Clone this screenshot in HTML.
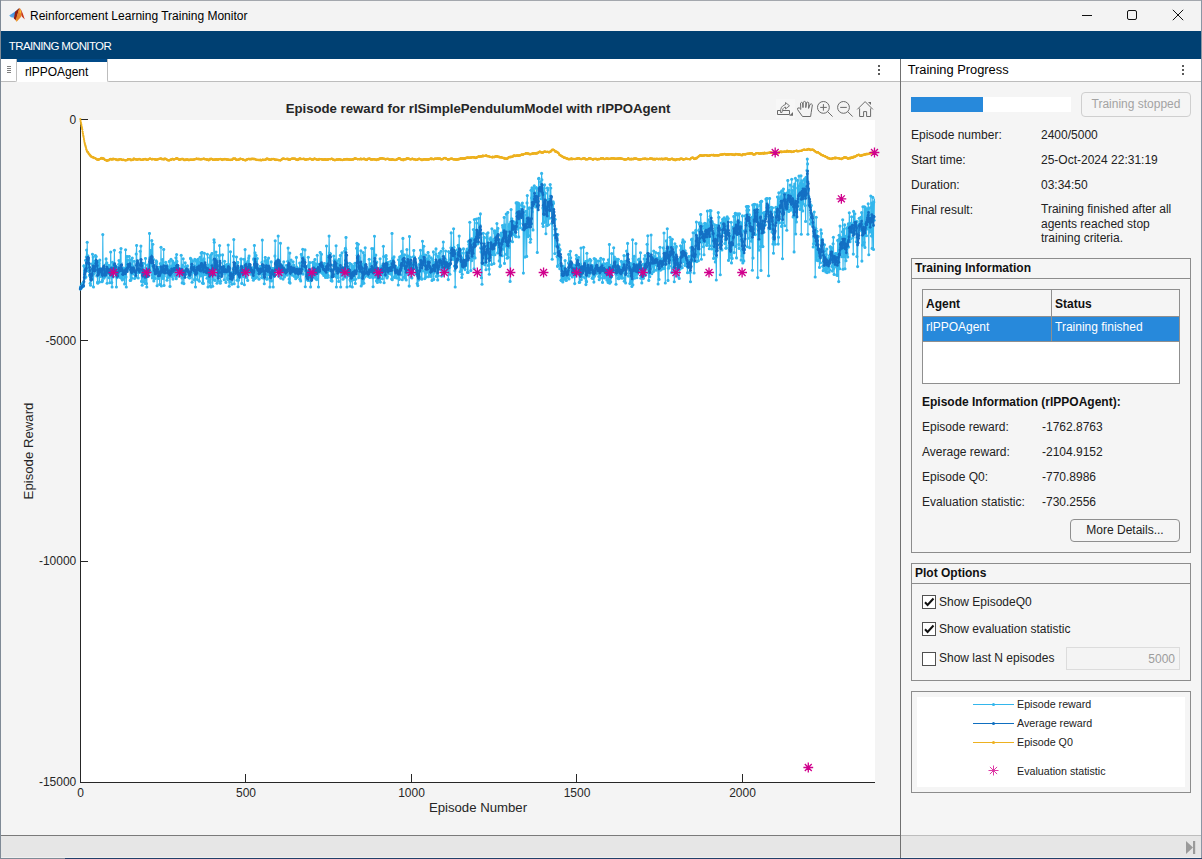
<!DOCTYPE html>
<html><head><meta charset="utf-8">
<style>
*{box-sizing:border-box;margin:0;padding:0}
html,body{width:1202px;height:859px;overflow:hidden;background:#f3f3f3;font-family:"Liberation Sans",sans-serif;color:#212121}
.abs{position:absolute}
#top0{left:0;top:0;width:1202px;height:1px;background:#a3a7ad}
#lb{left:0;top:0;width:1px;height:859px;background:#7f8a96}
#rb{left:1201px;top:0;width:1px;height:859px;background:#8a96a4}
#bb{left:0;top:858px;width:1202px;height:1px;background:linear-gradient(to right,#7f8a96 65px,#22406a 65px)}
#title{left:30px;top:9px;font-size:12px;color:#000;white-space:nowrap}
#band{left:1px;top:31px;width:1200px;height:28px;background:#004072}
#band span{position:absolute;left:7.8px;top:8.6px;font-size:11.5px;color:#fff;letter-spacing:-0.62px;white-space:nowrap}
#tabbar{left:1px;top:59px;width:899px;height:23px;background:#fff}
#tabrest{left:107px;top:59px;width:793px;height:23px;background:#fff;border-left:1px solid #bdbdbd;border-bottom:1px solid #bdbdbd;border-bottom-left-radius:2px}
#grip{left:1px;top:59px;width:16px;height:23px;background:#fff;border-right:1px solid #bdbdbd;border-bottom:1px solid #bdbdbd;border-bottom-right-radius:2px}
#tab{left:17px;top:59px;width:90px;height:23px;background:#fff;border-top:3px solid #004a88}
#tab span{position:absolute;left:8px;top:3px;font-size:12px;color:#000}
#plotbg{left:1px;top:82px;width:899px;height:753px;background:#f4f4f4}
#axes{left:81px;top:120px;width:794px;height:662px;background:#fff}
#divider{left:900px;top:59px;width:1px;height:799px;background:#707070;z-index:5}
#rhead{left:901px;top:59px;width:300px;height:23px;background:#fff;border-bottom:1px solid #bdbdbd}
#rhead span{position:absolute;left:6.7px;top:3.2px;font-size:12.85px;color:#000}
#rbg{left:901px;top:82px;width:300px;height:753px;background:#f5f5f5}
#status{left:1px;top:835px;width:1200px;height:23px;background:#e6e6e6;border-bottom:1px solid #efefef}
#stl{left:1px;top:835px;width:899px;height:1px;background:#7a7a7a}
#str{left:901px;top:835px;width:300px;height:1px;background:#bdbdbd}
.dots{width:3px;height:11px}
.dots i{position:absolute;left:0;width:2px;height:2px;background:#5a5a5a}
.t12{font-size:12px;white-space:nowrap;position:absolute;color:#222}
.tb{font-weight:bold}
.panel{position:absolute;border:1px solid #8c8c8c;background:#f5f5f5}
.phead{position:absolute;left:0;top:0;right:0;height:20px;border-bottom:1px solid #8c8c8c}
.phead span{position:absolute;left:3px;top:2px;font-size:12px;font-weight:bold;color:#111}
.ytl{position:absolute;left:0;width:76.3px;text-align:right;font-size:12px;color:#262626}
.xtl{position:absolute;top:786px;transform:translateX(-50%);font-size:12px;color:#262626;white-space:nowrap}
.btn{position:absolute;border:1px solid #8f8f8f;border-radius:4px;background:#f5f5f5;text-align:center;font-size:12px;color:#222;white-space:nowrap}
.cb{width:14px;height:14px;border:1px solid #505050;background:#fff}
.cb svg{position:absolute;left:0;top:0}
.leg{position:absolute;left:1017px;margin-top:1px;font-size:10.7px;color:#222;white-space:nowrap}
</style></head><body>
<div class="abs" id="top0"></div>
<div class="abs" id="title">Reinforcement Learning Training Monitor</div>
<!-- matlab logo -->
<svg class="abs" style="left:0;top:0" width="30" height="30" viewBox="0 0 30 30">
<defs><linearGradient id="lgb" x1="0" y1="1" x2="1" y2="0"><stop offset="0" stop-color="#62b4ee"/><stop offset="0.6" stop-color="#3a86d8"/><stop offset="1" stop-color="#1f55a0"/></linearGradient></defs>
<path d="M9.2 15.6 L13 13 L16.5 10.4 L19.2 8 L17.4 11.6 L15.4 14.6 L14 17.8 L11 17.3 Z" fill="url(#lgb)"/>
<path d="M15.2 11.8 L19.5 7.9 L18 13 L17 17 L16.5 21 L13.8 18.4 Z" fill="#8e1e12"/>
<path d="M19.6 7.8 L21.5 11 L22 15 L20.5 17.4 L16.6 21.8 L15.6 19.8 L17.6 14 L18.4 10.4 Z" fill="#e5832c"/>
<path d="M20 9 L21.1 11.5 L20.8 13.2 L19.4 13 Z" fill="#f4c12c"/>
<path d="M16 20 L17.4 19 L16.6 21.8 Z" fill="#f4b12e"/>
<path d="M20.2 8 L22.8 13.4 L24.8 19.6 L21.8 16.6 L21.2 11 Z" fill="#c8361c"/>
</svg>
<!-- window controls -->
<div class="abs" style="left:1082px;top:15px;width:10px;height:1px;background:#111"></div>
<div class="abs" style="left:1127px;top:10px;width:10px;height:10px;border:1px solid #111;border-radius:2px"></div>
<svg class="abs" style="left:1172px;top:9px" width="12" height="12" viewBox="0 0 12 12"><path d="M0.8 0.8L11.2 11.2M11.2 0.8L0.8 11.2" stroke="#111" stroke-width="1"/></svg>
<div class="abs" id="band"><span>TRAINING MONITOR</span></div>
<div class="abs" id="tabbar"></div>
<div class="abs" id="tabrest"></div>
<div class="abs" id="grip"></div>
<div class="abs" style="left:7px;top:66px;width:4px;height:1px;background:#808080"></div>
<div class="abs" style="left:7px;top:68px;width:4px;height:1px;background:#808080"></div>
<div class="abs" style="left:7px;top:70px;width:4px;height:1px;background:#808080"></div>
<div class="abs" style="left:7px;top:72px;width:4px;height:1px;background:#808080"></div>
<div class="abs" id="tab"><span>rlPPOAgent</span></div>
<div class="abs dots" style="left:878px;top:65px"><i style="top:0"></i><i style="top:4px"></i><i style="top:8px"></i></div>
<div class="abs" id="plotbg"></div>
<div class="abs" id="axes"></div>

<div class="abs" style="left:80px;top:119px;width:1px;height:664px;background:#262626"></div>
<div class="abs" style="left:80px;top:782px;width:795px;height:1px;background:#262626"></div>
<div class="abs" style="left:80px;top:119px;width:8px;height:1px;background:#262626"></div>
<div class="abs" style="left:80px;top:340px;width:8px;height:1px;background:#262626"></div>
<div class="abs" style="left:80px;top:561px;width:8px;height:1px;background:#262626"></div>
<div class="abs" style="left:245px;top:774px;width:1px;height:8px;background:#262626"></div>
<div class="abs" style="left:411px;top:774px;width:1px;height:8px;background:#262626"></div>
<div class="abs" style="left:576px;top:774px;width:1px;height:8px;background:#262626"></div>
<div class="abs" style="left:742px;top:774px;width:1px;height:8px;background:#262626"></div>
<div class="ytl" style="top:113px">0</div>
<div class="ytl" style="top:334px">-5000</div>
<div class="ytl" style="top:554px">-10000</div>
<div class="ytl" style="top:775px">-15000</div>
<div class="xtl" style="left:80.5px">0</div>
<div class="xtl" style="left:246px">500</div>
<div class="xtl" style="left:411.5px">1000</div>
<div class="xtl" style="left:577px">1500</div>
<div class="xtl" style="left:742.5px">2000</div>
<div class="abs" style="left:0;top:799.7px;width:956px;text-align:center;font-size:13.2px;color:#262626">Episode Number</div>
<div class="abs" style="left:28.8px;top:451px;width:0;height:0"><div style="position:absolute;left:-60px;top:-8px;width:120px;height:16px;text-align:center;font-size:13.2px;color:#262626;transform:rotate(-90deg)">Episode Reward</div></div>
<div class="abs" style="left:81px;top:101px;width:794px;text-align:center;font-size:13.2px;font-weight:bold;color:#262626">Episode reward for rlSimplePendulumModel with rlPPOAgent</div>

<svg class="abs" style="left:0;top:0" width="1202" height="859" viewBox="0 0 1202 859">
<defs>
<marker id="mlb" markerWidth="4" markerHeight="4" refX="2" refY="2" markerUnits="userSpaceOnUse"><circle cx="2" cy="2" r="1.55" fill="#33B6EC"/></marker>
<marker id="mdb" markerWidth="4" markerHeight="4" refX="2" refY="2" markerUnits="userSpaceOnUse"><circle cx="2" cy="2" r="1.4" fill="#1470C4"/></marker>
<marker id="mor" markerWidth="4" markerHeight="4" refX="2" refY="2" markerUnits="userSpaceOnUse"><circle cx="2" cy="2" r="1.1" fill="#EDB120"/></marker>
<clipPath id="ax"><rect x="78" y="115" width="800" height="670"/></clipPath>
</defs>
<g clip-path="url(#ax)" fill="none">
<polyline points="80.3,119.1 80.6,121.1 81.0,123.1 81.3,124.7 81.6,126.4 82.0,128.0 82.3,129.5 82.6,131.8 82.9,133.7 83.3,135.7 83.6,137.1 83.9,139.1 84.3,141.0 84.6,142.8 84.9,144.0 85.3,145.3 85.6,146.4 85.9,147.6 86.3,149.2 86.6,150.1 86.9,151.3 87.2,151.5 87.6,151.8 87.9,152.2 88.2,152.8 88.6,153.4 88.9,154.2 89.2,154.2 89.6,154.6 89.9,155.2 90.2,155.7 90.6,155.7 90.9,156.4 91.2,156.6 91.6,156.6 91.9,157.0 92.2,157.0 92.5,157.4 92.9,157.2 93.2,157.3 93.5,157.4 93.9,158.1 94.2,158.0 94.5,157.8 94.9,158.1 95.2,158.1 95.5,158.5 95.9,158.7 96.2,159.1 96.5,159.2 96.8,159.3 97.2,159.5 97.5,159.7 97.8,159.7 98.2,159.6 98.5,160.0 98.8,159.5 99.2,159.2 99.5,159.2 99.8,159.1 100.2,158.9 100.5,158.9 100.8,158.6 101.1,158.1 101.5,158.1 101.8,157.8 102.1,158.7 102.5,158.6 102.8,158.7 103.1,158.6 103.5,158.4 103.8,158.7 104.1,159.2 104.5,159.3 104.8,160.0 105.1,159.8 105.4,160.0 105.8,160.1 106.1,160.1 106.4,160.7 106.8,160.7 107.1,160.7 107.4,160.5 107.8,160.5 108.1,160.1 108.4,160.2 108.8,160.3 109.1,160.1 109.4,159.5 109.8,159.0 110.1,159.1 110.4,159.2 110.7,158.9 111.1,159.4 111.4,159.4 111.7,159.5 112.1,159.4 112.4,158.8 112.7,159.3 113.1,159.4 113.4,158.7 113.7,159.2 114.1,159.0 114.4,159.0 114.7,159.1 115.0,159.2 115.4,159.3 115.7,159.3 116.0,159.6 116.4,159.5 116.7,159.7 117.0,160.2 117.4,160.1 117.7,159.6 118.0,159.9 118.4,160.2 118.7,159.6 119.0,159.7 119.3,159.4 119.7,159.1 120.0,159.0 120.3,159.0 120.7,159.2 121.0,159.5 121.3,159.6 121.7,159.9 122.0,159.6 122.3,160.0 122.7,160.1 123.0,159.9 123.3,159.8 123.6,159.7 124.0,160.1 124.3,160.1 124.6,160.0 125.0,160.2 125.3,160.3 125.6,160.4 126.0,160.1 126.3,160.1 126.6,160.1 127.0,160.2 127.3,159.9 127.6,159.5 127.9,159.0 128.3,159.3 128.6,159.1 128.9,159.4 129.3,159.0 129.6,159.1 129.9,159.0 130.3,159.6 130.6,160.0 130.9,160.3 131.3,160.2 131.6,159.9 131.9,159.5 132.3,159.9 132.6,160.0 132.9,160.1 133.2,159.6 133.6,158.7 133.9,158.9 134.2,158.6 134.6,159.1 134.9,159.4 135.2,159.3 135.6,159.1 135.9,159.3 136.2,159.5 136.6,159.5 136.9,159.7 137.2,159.6 137.5,159.5 137.9,159.6 138.2,159.5 138.5,159.1 138.9,159.2 139.2,158.9 139.5,159.1 139.9,159.5 140.2,159.3 140.5,159.5 140.9,159.5 141.2,159.8 141.5,160.0 141.8,159.9 142.2,159.9 142.5,160.0 142.8,159.7 143.2,159.1 143.5,159.7 143.8,159.2 144.2,159.3 144.5,159.1 144.8,159.1 145.2,158.9 145.5,159.0 145.8,159.0 146.1,159.8 146.5,159.6 146.8,159.8 147.1,159.8 147.5,160.0 147.8,159.6 148.1,159.5 148.5,159.3 148.8,159.2 149.1,158.8 149.5,158.8 149.8,158.6 150.1,158.5 150.5,158.8 150.8,158.9 151.1,159.0 151.4,159.2 151.8,159.3 152.1,159.6 152.4,158.9 152.8,159.0 153.1,159.0 153.4,159.1 153.8,159.0 154.1,159.2 154.4,159.4 154.8,159.5 155.1,159.2 155.4,159.6 155.7,159.8 156.1,159.6 156.4,159.9 156.7,159.5 157.1,159.5 157.4,159.3 157.7,159.4 158.1,159.5 158.4,159.0 158.7,158.9 159.1,159.0 159.4,158.9 159.7,159.0 160.0,158.6 160.4,158.5 160.7,158.5 161.0,158.5 161.4,158.7 161.7,159.3 162.0,158.9 162.4,159.0 162.7,159.0 163.0,159.6 163.4,159.1 163.7,158.8 164.0,159.4 164.3,159.3 164.7,158.6 165.0,158.5 165.3,158.9 165.7,159.0 166.0,158.9 166.3,159.5 166.7,159.5 167.0,159.5 167.3,159.8 167.7,160.2 168.0,160.5 168.3,160.0 168.7,160.3 169.0,160.4 169.3,160.3 169.6,160.2 170.0,160.1 170.3,159.8 170.6,159.3 171.0,159.9 171.3,159.7 171.6,159.5 172.0,159.3 172.3,158.9 172.6,158.9 173.0,159.1 173.3,159.3 173.6,159.6 173.9,159.4 174.3,159.3 174.6,159.3 174.9,159.1 175.3,159.1 175.6,158.9 175.9,158.6 176.3,158.2 176.6,158.8 176.9,158.2 177.3,158.9 177.6,158.4 177.9,158.8 178.2,159.1 178.6,159.6 178.9,159.3 179.2,159.5 179.6,160.0 179.9,159.8 180.2,159.3 180.6,159.0 180.9,159.2 181.2,159.4 181.6,158.8 181.9,159.1 182.2,159.0 182.5,158.8 182.9,158.8 183.2,159.2 183.5,160.1 183.9,159.7 184.2,159.9 184.5,159.8 184.9,160.3 185.2,159.5 185.5,159.9 185.9,159.5 186.2,159.7 186.5,159.3 186.8,160.0 187.2,159.6 187.5,159.4 187.8,159.6 188.2,159.7 188.5,160.0 188.8,160.3 189.2,159.8 189.5,160.1 189.8,159.5 190.2,159.6 190.5,159.8 190.8,159.7 191.2,159.8 191.5,159.5 191.8,159.9 192.1,159.7 192.5,159.6 192.8,159.8 193.1,159.9 193.5,159.8 193.8,160.0 194.1,159.2 194.5,159.3 194.8,159.1 195.1,159.0 195.5,159.2 195.8,159.3 196.1,158.8 196.4,158.7 196.8,158.7 197.1,158.8 197.4,159.1 197.8,159.0 198.1,159.2 198.4,159.2 198.8,158.6 199.1,159.1 199.4,159.5 199.8,159.0 200.1,159.0 200.4,159.5 200.7,159.4 201.1,159.5 201.4,159.1 201.7,159.2 202.1,158.9 202.4,159.2 202.7,159.2 203.1,159.0 203.4,158.9 203.7,158.7 204.1,158.7 204.4,159.2 204.7,159.2 205.0,159.2 205.4,159.1 205.7,159.2 206.0,159.2 206.4,159.6 206.7,160.0 207.0,159.3 207.4,159.4 207.7,159.8 208.0,159.7 208.4,160.1 208.7,160.5 209.0,159.8 209.4,159.4 209.7,158.9 210.0,159.2 210.3,159.6 210.7,158.8 211.0,159.1 211.3,158.5 211.7,159.0 212.0,159.1 212.3,159.2 212.7,159.8 213.0,159.8 213.3,159.6 213.7,159.6 214.0,160.0 214.3,159.7 214.6,159.7 215.0,159.4 215.3,159.8 215.6,159.3 216.0,159.3 216.3,159.7 216.6,159.2 217.0,159.4 217.3,159.6 217.6,159.7 218.0,159.8 218.3,159.4 218.6,159.5 218.9,159.1 219.3,159.0 219.6,159.2 219.9,159.2 220.3,158.9 220.6,159.1 220.9,159.1 221.3,159.2 221.6,159.6 221.9,159.9 222.3,160.1 222.6,159.9 222.9,159.3 223.2,159.0 223.6,159.2 223.9,159.3 224.2,159.3 224.6,159.4 224.9,158.9 225.2,159.1 225.6,159.2 225.9,159.2 226.2,159.3 226.6,159.8 226.9,159.5 227.2,159.5 227.6,159.7 227.9,159.3 228.2,159.7 228.5,159.8 228.9,160.0 229.2,159.9 229.5,159.5 229.9,160.0 230.2,160.1 230.5,159.8 230.9,159.9 231.2,159.7 231.5,159.9 231.9,159.8 232.2,159.9 232.5,159.6 232.8,159.1 233.2,158.4 233.5,158.6 233.8,158.8 234.2,158.8 234.5,158.6 234.8,158.9 235.2,158.4 235.5,158.8 235.8,159.6 236.2,159.8 236.5,159.7 236.8,160.1 237.1,159.7 237.5,160.0 237.8,159.8 238.1,159.8 238.5,159.6 238.8,159.5 239.1,159.4 239.5,159.4 239.8,159.1 240.1,158.7 240.5,158.6 240.8,159.1 241.1,159.2 241.4,159.0 241.8,159.0 242.1,159.0 242.4,159.1 242.8,159.3 243.1,159.9 243.4,159.7 243.8,159.8 244.1,159.8 244.4,160.1 244.8,160.2 245.1,160.2 245.4,160.3 245.8,160.4 246.1,159.7 246.4,159.8 246.7,159.8 247.1,159.4 247.4,159.3 247.7,159.2 248.1,159.1 248.4,158.8 248.7,158.8 249.1,159.1 249.4,159.3 249.7,158.9 250.1,159.3 250.4,159.3 250.7,158.8 251.0,159.1 251.4,158.8 251.7,159.4 252.0,158.7 252.4,158.8 252.7,158.8 253.0,159.0 253.4,159.1 253.7,158.7 254.0,159.3 254.4,159.2 254.7,158.9 255.0,159.1 255.3,159.2 255.7,159.3 256.0,159.6 256.3,160.0 256.7,160.0 257.0,160.1 257.3,159.8 257.7,159.8 258.0,159.9 258.3,160.1 258.7,159.9 259.0,160.2 259.3,160.0 259.6,160.2 260.0,159.8 260.3,159.7 260.6,160.3 261.0,160.2 261.3,160.1 261.6,160.3 262.0,160.1 262.3,159.9 262.6,159.7 263.0,159.7 263.3,159.8 263.6,160.1 263.9,160.0 264.3,159.9 264.6,159.9 264.9,159.9 265.3,159.5 265.6,159.9 265.9,159.4 266.3,159.1 266.6,158.7 266.9,158.5 267.3,159.1 267.6,158.6 267.9,158.9 268.3,159.4 268.6,159.1 268.9,159.5 269.2,159.7 269.6,159.3 269.9,159.6 270.2,159.8 270.6,159.9 270.9,159.8 271.2,159.3 271.6,159.1 271.9,158.9 272.2,159.1 272.6,159.2 272.9,159.2 273.2,159.0 273.5,158.9 273.9,159.1 274.2,159.2 274.5,159.4 274.9,159.8 275.2,160.0 275.5,159.4 275.9,160.1 276.2,159.8 276.5,159.7 276.9,159.9 277.2,160.0 277.5,159.8 277.8,159.8 278.2,159.8 278.5,160.3 278.8,160.0 279.2,160.0 279.5,160.3 279.8,160.0 280.2,160.3 280.5,160.6 280.8,160.1 281.2,159.8 281.5,159.7 281.8,159.2 282.1,159.3 282.5,158.5 282.8,158.8 283.1,158.7 283.5,158.6 283.8,158.9 284.1,158.5 284.5,159.0 284.8,159.0 285.1,159.2 285.5,159.1 285.8,159.0 286.1,159.0 286.5,158.9 286.8,158.9 287.1,158.9 287.4,159.4 287.8,158.6 288.1,159.1 288.4,159.2 288.8,159.9 289.1,159.3 289.4,159.5 289.8,159.8 290.1,159.7 290.4,159.3 290.8,159.1 291.1,159.1 291.4,158.9 291.7,158.7 292.1,158.8 292.4,158.6 292.7,158.5 293.1,158.5 293.4,158.5 293.7,158.8 294.1,158.6 294.4,159.0 294.7,158.5 295.1,158.6 295.4,158.8 295.7,159.5 296.0,159.4 296.4,159.5 296.7,159.8 297.0,160.0 297.4,160.1 297.7,159.4 298.0,159.4 298.4,159.9 298.7,159.4 299.0,158.8 299.4,158.7 299.7,158.5 300.0,158.7 300.3,158.4 300.7,159.2 301.0,159.2 301.3,159.1 301.7,158.9 302.0,159.0 302.3,159.0 302.7,159.1 303.0,158.9 303.3,159.2 303.7,158.7 304.0,158.8 304.3,159.0 304.7,159.6 305.0,159.3 305.3,159.5 305.6,159.9 306.0,159.6 306.3,159.4 306.6,159.7 307.0,159.4 307.3,159.0 307.6,159.2 308.0,159.2 308.3,159.3 308.6,159.2 309.0,159.1 309.3,158.9 309.6,158.7 309.9,158.8 310.3,158.8 310.6,158.8 310.9,158.8 311.3,159.2 311.6,159.7 311.9,159.4 312.3,159.7 312.6,159.6 312.9,159.5 313.3,159.3 313.6,159.6 313.9,159.2 314.2,158.7 314.6,158.5 314.9,158.7 315.2,159.0 315.6,159.0 315.9,159.3 316.2,159.3 316.6,159.1 316.9,159.5 317.2,159.9 317.6,160.0 317.9,159.6 318.2,159.9 318.5,159.7 318.9,159.6 319.2,158.8 319.5,159.4 319.9,159.0 320.2,159.0 320.5,159.0 320.9,159.1 321.2,159.2 321.5,159.5 321.9,159.4 322.2,159.5 322.5,159.3 322.8,159.7 323.2,160.0 323.5,159.6 323.8,159.4 324.2,159.7 324.5,159.4 324.8,159.3 325.2,159.2 325.5,159.8 325.8,159.8 326.2,159.5 326.5,159.7 326.8,159.7 327.2,159.4 327.5,159.7 327.8,159.7 328.1,159.6 328.5,159.4 328.8,159.2 329.1,159.1 329.5,159.0 329.8,159.0 330.1,159.0 330.5,159.3 330.8,159.1 331.1,158.8 331.5,158.9 331.8,158.6 332.1,158.9 332.4,159.2 332.8,159.6 333.1,159.5 333.4,159.9 333.8,159.7 334.1,159.9 334.4,159.9 334.8,160.4 335.1,160.1 335.4,160.0 335.8,159.8 336.1,159.9 336.4,159.3 336.7,159.7 337.1,159.6 337.4,159.5 337.7,159.7 338.1,159.6 338.4,159.6 338.7,159.3 339.1,159.4 339.4,159.3 339.7,159.2 340.1,159.6 340.4,159.6 340.7,159.8 341.0,160.1 341.4,159.7 341.7,159.8 342.0,160.0 342.4,160.1 342.7,160.1 343.0,159.8 343.4,159.8 343.7,159.4 344.0,159.5 344.4,159.3 344.7,159.7 345.0,159.3 345.4,159.4 345.7,159.2 346.0,159.0 346.3,159.7 346.7,159.3 347.0,158.9 347.3,159.2 347.7,159.1 348.0,159.8 348.3,159.4 348.7,159.1 349.0,159.6 349.3,159.4 349.7,159.8 350.0,159.7 350.3,159.4 350.6,159.8 351.0,159.5 351.3,159.6 351.6,159.9 352.0,159.5 352.3,159.5 352.6,159.2 353.0,159.5 353.3,159.7 353.6,159.2 354.0,158.9 354.3,158.6 354.6,158.6 354.9,158.3 355.3,158.3 355.6,158.9 355.9,158.6 356.3,158.9 356.6,158.9 356.9,158.9 357.3,159.1 357.6,159.3 357.9,159.3 358.3,159.1 358.6,159.0 358.9,159.0 359.2,159.3 359.6,159.2 359.9,159.3 360.2,159.2 360.6,158.7 360.9,158.7 361.2,159.4 361.6,159.2 361.9,159.3 362.2,159.0 362.6,159.1 362.9,158.9 363.2,159.1 363.6,159.2 363.9,158.7 364.2,158.7 364.5,159.1 364.9,159.5 365.2,159.0 365.5,159.8 365.9,159.4 366.2,159.7 366.5,160.0 366.9,160.1 367.2,159.7 367.5,159.1 367.9,158.9 368.2,158.6 368.5,158.8 368.8,159.0 369.2,158.8 369.5,158.4 369.8,158.7 370.2,159.0 370.5,159.4 370.8,159.4 371.2,159.7 371.5,159.4 371.8,159.2 372.2,159.3 372.5,159.4 372.8,159.7 373.1,159.4 373.5,159.0 373.8,159.1 374.1,159.2 374.5,159.4 374.8,159.6 375.1,159.5 375.5,159.6 375.8,159.5 376.1,159.8 376.5,160.2 376.8,159.7 377.1,159.5 377.4,159.3 377.8,159.2 378.1,159.1 378.4,159.6 378.8,159.7 379.1,158.9 379.4,158.6 379.8,158.7 380.1,158.6 380.4,158.7 380.8,158.4 381.1,158.5 381.4,158.3 381.7,158.4 382.1,158.5 382.4,158.3 382.7,158.3 383.1,158.5 383.4,158.8 383.7,158.9 384.1,159.0 384.4,158.7 384.7,158.9 385.1,159.3 385.4,159.5 385.7,159.3 386.1,159.0 386.4,159.2 386.7,158.8 387.0,158.8 387.4,158.8 387.7,159.0 388.0,158.7 388.4,159.2 388.7,159.2 389.0,159.5 389.4,159.5 389.7,159.7 390.0,159.7 390.4,159.5 390.7,159.6 391.0,159.9 391.3,159.7 391.7,159.9 392.0,159.2 392.3,159.2 392.7,159.4 393.0,159.5 393.3,159.9 393.7,159.8 394.0,159.9 394.3,159.7 394.7,160.0 395.0,160.2 395.3,160.0 395.6,159.8 396.0,159.5 396.3,159.8 396.6,160.0 397.0,159.2 397.3,159.2 397.6,159.1 398.0,158.9 398.3,158.6 398.6,158.2 399.0,158.6 399.3,158.2 399.6,158.2 399.9,158.6 400.3,158.8 400.6,159.2 400.9,159.4 401.3,159.5 401.6,160.0 401.9,159.9 402.3,160.2 402.6,159.7 402.9,159.4 403.3,159.7 403.6,160.3 403.9,159.1 404.3,159.4 404.6,159.5 404.9,159.0 405.2,159.1 405.6,159.3 405.9,159.6 406.2,158.8 406.6,158.3 406.9,158.5 407.2,158.4 407.6,158.6 407.9,158.7 408.2,158.6 408.6,158.7 408.9,158.7 409.2,158.9 409.5,159.1 409.9,159.1 410.2,159.4 410.5,159.5 410.9,159.3 411.2,159.0 411.5,159.2 411.9,159.2 412.2,158.7 412.5,158.7 412.9,159.0 413.2,159.3 413.5,159.1 413.8,159.4 414.2,159.3 414.5,159.2 414.8,159.2 415.2,159.5 415.5,159.8 415.8,160.1 416.2,159.8 416.5,159.9 416.8,159.5 417.2,159.8 417.5,159.7 417.8,159.6 418.1,159.1 418.5,159.0 418.8,158.8 419.1,158.7 419.5,158.8 419.8,159.2 420.1,159.2 420.5,159.1 420.8,159.3 421.1,159.6 421.5,159.9 421.8,160.2 422.1,160.2 422.5,159.6 422.8,159.6 423.1,159.7 423.4,159.6 423.8,159.3 424.1,159.5 424.4,159.2 424.8,159.5 425.1,159.4 425.4,159.3 425.8,159.4 426.1,159.7 426.4,159.4 426.8,159.4 427.1,159.6 427.4,159.5 427.7,159.4 428.1,159.8 428.4,159.4 428.7,159.2 429.1,159.4 429.4,159.2 429.7,159.2 430.1,159.1 430.4,158.7 430.7,158.5 431.1,158.5 431.4,158.7 431.7,159.3 432.0,158.5 432.4,159.1 432.7,158.9 433.0,159.1 433.4,159.1 433.7,159.3 434.0,159.3 434.4,159.1 434.7,158.6 435.0,158.5 435.4,158.6 435.7,159.0 436.0,158.9 436.3,158.5 436.7,158.7 437.0,158.8 437.3,158.5 437.7,158.6 438.0,158.4 438.3,158.6 438.7,158.7 439.0,159.1 439.3,158.9 439.7,158.4 440.0,158.7 440.3,158.7 440.7,159.2 441.0,159.3 441.3,159.6 441.6,159.0 442.0,159.0 442.3,159.2 442.6,159.3 443.0,158.9 443.3,158.5 443.6,158.6 444.0,158.0 444.3,158.2 444.6,158.1 445.0,157.9 445.3,158.0 445.6,158.1 445.9,158.4 446.3,158.9 446.6,158.9 446.9,159.0 447.3,159.1 447.6,159.4 447.9,159.8 448.3,159.4 448.6,159.3 448.9,159.5 449.3,159.3 449.6,159.4 449.9,159.0 450.2,158.9 450.6,158.6 450.9,158.8 451.2,158.9 451.6,158.7 451.9,158.7 452.2,158.5 452.6,159.0 452.9,159.2 453.2,159.4 453.6,159.2 453.9,159.4 454.2,159.3 454.5,159.5 454.9,159.2 455.2,159.6 455.5,159.7 455.9,159.5 456.2,159.3 456.5,160.0 456.9,159.6 457.2,159.1 457.5,159.4 457.9,159.7 458.2,159.4 458.5,159.1 458.8,159.1 459.2,158.6 459.5,159.3 459.8,159.1 460.2,158.9 460.5,158.6 460.8,158.2 461.2,158.5 461.5,158.6 461.8,158.7 462.2,158.6 462.5,158.4 462.8,158.4 463.2,158.4 463.5,158.8 463.8,158.7 464.1,158.9 464.5,158.1 464.8,158.3 465.1,158.1 465.5,158.8 465.8,157.9 466.1,157.8 466.5,158.0 466.8,157.7 467.1,157.5 467.5,157.8 467.8,157.4 468.1,157.9 468.4,157.9 468.8,157.7 469.1,157.6 469.4,157.9 469.8,158.0 470.1,157.6 470.4,157.4 470.8,157.9 471.1,157.6 471.4,157.6 471.8,157.3 472.1,157.3 472.4,157.0 472.7,157.2 473.1,157.5 473.4,157.4 473.7,157.3 474.1,157.2 474.4,157.0 474.7,157.6 475.1,157.8 475.4,158.1 475.7,158.0 476.1,157.5 476.4,157.2 476.7,157.9 477.0,157.2 477.4,157.1 477.7,157.0 478.0,156.8 478.4,156.4 478.7,156.4 479.0,156.6 479.4,156.8 479.7,156.8 480.0,156.4 480.4,156.4 480.7,156.5 481.0,156.4 481.4,156.3 481.7,156.3 482.0,156.4 482.3,156.4 482.7,155.5 483.0,155.7 483.3,156.3 483.7,156.2 484.0,155.9 484.3,156.0 484.7,155.9 485.0,156.0 485.3,155.9 485.7,155.7 486.0,155.5 486.3,155.4 486.6,155.6 487.0,156.3 487.3,156.0 487.6,156.3 488.0,156.0 488.3,156.2 488.6,156.2 489.0,156.5 489.3,156.5 489.6,156.8 490.0,157.1 490.3,157.0 490.6,156.8 490.9,156.9 491.3,157.1 491.6,157.0 491.9,157.0 492.3,157.7 492.6,156.9 492.9,156.7 493.3,157.1 493.6,157.1 493.9,157.0 494.3,157.3 494.6,156.8 494.9,156.7 495.2,156.6 495.6,156.7 495.9,156.4 496.2,156.3 496.6,156.4 496.9,156.4 497.2,156.4 497.6,156.4 497.9,156.8 498.2,156.7 498.6,157.2 498.9,157.1 499.2,156.7 499.6,157.1 499.9,157.5 500.2,157.6 500.5,157.2 500.9,157.0 501.2,157.1 501.5,157.2 501.9,157.5 502.2,157.9 502.5,157.9 502.9,157.8 503.2,157.8 503.5,158.1 503.9,158.4 504.2,157.9 504.5,158.1 504.8,159.0 505.2,158.6 505.5,158.6 505.8,158.6 506.2,158.9 506.5,158.7 506.8,158.6 507.2,159.0 507.5,158.7 507.8,158.0 508.2,157.7 508.5,157.7 508.8,157.4 509.1,157.1 509.5,157.1 509.8,156.8 510.1,156.9 510.5,157.4 510.8,156.7 511.1,157.1 511.5,156.8 511.8,156.9 512.1,156.5 512.5,156.8 512.8,156.6 513.1,156.5 513.4,155.7 513.8,155.6 514.1,155.8 514.4,155.7 514.8,155.4 515.1,156.2 515.4,156.0 515.8,156.0 516.1,155.6 516.4,155.7 516.8,155.5 517.1,155.7 517.4,155.5 517.7,155.4 518.1,155.8 518.4,155.3 518.7,155.9 519.1,155.3 519.4,155.6 519.7,155.3 520.1,155.3 520.4,155.4 520.7,155.1 521.1,154.8 521.4,154.8 521.7,154.3 522.1,154.7 522.4,154.8 522.7,154.9 523.0,154.6 523.4,154.3 523.7,154.3 524.0,154.1 524.4,154.0 524.7,154.0 525.0,153.9 525.4,153.6 525.7,153.7 526.0,153.2 526.4,153.1 526.7,153.3 527.0,153.6 527.3,153.5 527.7,153.4 528.0,153.7 528.3,153.7 528.7,153.6 529.0,154.2 529.3,154.2 529.7,153.9 530.0,154.4 530.3,154.2 530.7,154.1 531.0,153.9 531.3,154.2 531.6,153.9 532.0,153.8 532.3,153.7 532.6,153.3 533.0,153.7 533.3,153.3 533.6,153.6 534.0,153.5 534.3,153.4 534.6,153.2 535.0,153.0 535.3,153.7 535.6,153.5 535.9,153.4 536.3,153.4 536.6,153.4 536.9,153.4 537.3,152.7 537.6,153.3 537.9,153.0 538.3,152.8 538.6,152.4 538.9,152.2 539.3,152.1 539.6,151.6 539.9,151.5 540.3,151.8 540.6,152.2 540.9,152.2 541.2,152.6 541.6,152.4 541.9,152.6 542.2,152.3 542.6,152.9 542.9,152.6 543.2,152.4 543.6,152.0 543.9,151.8 544.2,151.5 544.6,151.7 544.9,151.7 545.2,151.7 545.5,151.9 545.9,152.0 546.2,151.8 546.5,152.1 546.9,151.9 547.2,151.9 547.5,151.8 547.9,151.8 548.2,151.9 548.5,152.2 548.9,152.4 549.2,152.2 549.5,152.2 549.8,151.9 550.2,151.7 550.5,151.3 550.8,151.3 551.2,151.4 551.5,150.6 551.8,149.9 552.2,150.1 552.5,149.6 552.8,150.1 553.2,149.7 553.5,149.8 553.8,150.2 554.1,150.1 554.5,150.5 554.8,150.8 555.1,151.5 555.5,151.9 555.8,151.5 556.1,151.5 556.5,151.7 556.8,151.8 557.1,152.1 557.5,152.4 557.8,153.0 558.1,152.6 558.5,153.0 558.8,153.6 559.1,153.8 559.4,154.9 559.8,155.2 560.1,155.1 560.4,155.2 560.8,155.7 561.1,155.8 561.4,156.0 561.8,156.1 562.1,156.7 562.4,156.5 562.8,156.8 563.1,156.9 563.4,157.3 563.7,157.4 564.1,157.8 564.4,157.7 564.7,157.6 565.1,157.6 565.4,158.0 565.7,158.1 566.1,158.3 566.4,158.6 566.7,158.3 567.1,158.6 567.4,158.4 567.7,159.0 568.0,159.0 568.4,159.4 568.7,159.2 569.0,158.8 569.4,159.1 569.7,159.5 570.0,158.9 570.4,159.1 570.7,159.1 571.0,158.6 571.4,158.4 571.7,158.5 572.0,159.5 572.3,159.0 572.7,158.9 573.0,158.9 573.3,159.0 573.7,159.0 574.0,158.9 574.3,159.1 574.7,159.0 575.0,159.1 575.3,158.9 575.7,159.1 576.0,158.9 576.3,158.9 576.6,158.7 577.0,158.6 577.3,158.6 577.6,158.6 578.0,158.2 578.3,158.3 578.6,158.3 579.0,158.4 579.3,158.4 579.6,158.6 580.0,158.8 580.3,159.1 580.6,159.0 581.0,158.9 581.3,159.3 581.6,159.0 581.9,159.0 582.3,158.9 582.6,158.7 582.9,158.6 583.3,158.5 583.6,158.5 583.9,158.2 584.3,158.3 584.6,158.3 584.9,158.4 585.3,159.1 585.6,159.4 585.9,159.5 586.2,159.2 586.6,159.3 586.9,159.2 587.2,159.3 587.6,159.2 587.9,159.3 588.2,159.0 588.6,158.6 588.9,158.4 589.2,158.4 589.6,158.4 589.9,158.3 590.2,158.6 590.5,158.6 590.9,158.5 591.2,158.9 591.5,158.8 591.9,159.1 592.2,159.2 592.5,159.4 592.9,159.6 593.2,159.7 593.5,159.4 593.9,158.8 594.2,158.9 594.5,159.0 594.8,158.9 595.2,159.0 595.5,159.1 595.8,158.7 596.2,158.8 596.5,159.2 596.8,159.3 597.2,159.6 597.5,159.4 597.8,159.3 598.2,159.5 598.5,158.9 598.8,159.1 599.2,159.3 599.5,159.1 599.8,159.1 600.1,158.8 600.5,158.6 600.8,158.7 601.1,158.2 601.5,158.6 601.8,158.6 602.1,158.6 602.5,158.1 602.8,158.2 603.1,158.3 603.5,158.9 603.8,158.8 604.1,159.2 604.4,158.9 604.8,159.1 605.1,159.1 605.4,159.0 605.8,158.5 606.1,158.5 606.4,158.5 606.8,158.5 607.1,158.6 607.4,158.5 607.8,158.7 608.1,158.9 608.4,158.7 608.7,159.1 609.1,158.9 609.4,158.9 609.7,158.9 610.1,158.9 610.4,158.8 610.7,158.8 611.1,158.4 611.4,158.5 611.7,158.0 612.1,158.4 612.4,158.4 612.7,158.5 613.0,158.1 613.4,158.6 613.7,158.4 614.0,158.4 614.4,158.6 614.7,158.8 615.0,158.6 615.4,158.8 615.7,158.5 616.0,159.0 616.4,158.9 616.7,158.6 617.0,158.6 617.4,158.8 617.7,158.7 618.0,158.5 618.3,158.4 618.7,158.8 619.0,158.6 619.3,158.4 619.7,158.6 620.0,158.0 620.3,158.3 620.7,158.4 621.0,158.9 621.3,158.7 621.7,158.5 622.0,158.8 622.3,158.8 622.6,158.9 623.0,158.9 623.3,159.2 623.6,159.4 624.0,159.0 624.3,159.4 624.6,159.6 625.0,159.6 625.3,159.7 625.6,159.5 626.0,159.5 626.3,159.2 626.6,159.2 626.9,159.3 627.3,159.1 627.6,158.8 627.9,158.7 628.3,158.2 628.6,158.4 628.9,158.9 629.3,159.4 629.6,159.2 629.9,159.2 630.3,159.2 630.6,158.9 630.9,159.4 631.2,159.5 631.6,158.7 631.9,159.3 632.2,159.2 632.6,159.0 632.9,158.9 633.2,159.5 633.6,158.8 633.9,158.6 634.2,158.3 634.6,158.8 634.9,158.5 635.2,158.8 635.6,158.4 635.9,158.6 636.2,158.5 636.5,158.9 636.9,158.8 637.2,158.8 637.5,159.3 637.9,159.2 638.2,159.2 638.5,159.4 638.9,159.6 639.2,159.7 639.5,159.3 639.9,159.5 640.2,159.8 640.5,159.3 640.8,159.0 641.2,159.2 641.5,159.1 641.8,159.4 642.2,159.0 642.5,158.9 642.8,158.8 643.2,158.7 643.5,158.9 643.8,159.0 644.2,159.1 644.5,158.8 644.8,158.4 645.1,158.8 645.5,158.8 645.8,158.6 646.1,158.9 646.5,159.1 646.8,159.4 647.1,158.9 647.5,159.1 647.8,158.9 648.1,159.2 648.5,159.1 648.8,159.1 649.1,159.0 649.4,159.0 649.8,158.5 650.1,158.3 650.4,158.6 650.8,158.7 651.1,158.7 651.4,158.8 651.8,158.6 652.1,158.6 652.4,158.7 652.8,159.3 653.1,159.4 653.4,159.3 653.7,159.2 654.1,158.6 654.4,159.3 654.7,159.5 655.1,159.6 655.4,159.3 655.7,159.1 656.1,158.7 656.4,159.0 656.7,158.9 657.1,159.0 657.4,158.8 657.7,158.9 658.1,158.8 658.4,159.3 658.7,159.1 659.0,159.2 659.4,158.8 659.7,158.8 660.0,158.9 660.4,159.4 660.7,158.9 661.0,159.2 661.4,159.0 661.7,158.6 662.0,158.7 662.4,159.3 662.7,159.4 663.0,159.5 663.3,159.0 663.7,158.9 664.0,158.9 664.3,158.7 664.7,159.2 665.0,159.3 665.3,158.7 665.7,158.4 666.0,158.8 666.3,158.9 666.7,158.9 667.0,158.6 667.3,158.7 667.6,159.3 668.0,159.5 668.3,159.6 668.6,159.5 669.0,159.0 669.3,159.6 669.6,159.4 670.0,159.7 670.3,159.3 670.6,159.1 671.0,158.9 671.3,159.2 671.6,159.0 671.9,158.7 672.3,158.7 672.6,159.3 672.9,159.3 673.3,159.4 673.6,159.4 673.9,159.3 674.3,160.2 674.6,159.7 674.9,159.7 675.3,159.9 675.6,160.3 675.9,159.9 676.3,159.4 676.6,159.1 676.9,159.4 677.2,159.5 677.6,159.2 677.9,159.1 678.2,159.2 678.6,159.3 678.9,159.2 679.2,159.1 679.6,159.8 679.9,159.2 680.2,158.6 680.6,158.9 680.9,158.7 681.2,159.0 681.5,158.7 681.9,158.6 682.2,158.9 682.5,159.1 682.9,159.0 683.2,159.9 683.5,159.4 683.9,159.5 684.2,159.0 684.5,159.2 684.9,159.2 685.2,159.2 685.5,158.8 685.8,158.5 686.2,158.7 686.5,158.8 686.8,159.0 687.2,158.9 687.5,158.8 687.8,159.2 688.2,159.0 688.5,159.0 688.8,159.1 689.2,159.1 689.5,159.0 689.8,159.3 690.1,159.4 690.5,159.1 690.8,158.5 691.1,158.1 691.5,157.8 691.8,158.0 692.1,157.7 692.5,158.0 692.8,157.4 693.1,157.9 693.5,158.0 693.8,158.7 694.1,158.9 694.5,158.7 694.8,159.1 695.1,158.7 695.4,158.7 695.8,158.8 696.1,157.9 696.4,158.5 696.8,157.9 697.1,158.2 697.4,157.6 697.8,157.1 698.1,156.9 698.4,157.0 698.8,156.1 699.1,156.2 699.4,155.8 699.7,155.7 700.1,155.4 700.4,155.4 700.7,155.2 701.1,155.4 701.4,155.9 701.7,155.9 702.1,155.7 702.4,155.6 702.7,155.6 703.1,155.6 703.4,155.5 703.7,155.5 704.0,155.6 704.4,155.3 704.7,155.4 705.0,155.2 705.4,155.2 705.7,155.1 706.0,155.1 706.4,155.2 706.7,155.4 707.0,155.6 707.4,155.7 707.7,155.5 708.0,155.7 708.3,156.0 708.7,155.6 709.0,155.7 709.3,155.8 709.7,155.6 710.0,155.2 710.3,155.6 710.7,155.0 711.0,155.2 711.3,155.0 711.7,154.9 712.0,155.2 712.3,155.2 712.6,155.1 713.0,155.3 713.3,154.9 713.6,154.9 714.0,155.7 714.3,155.5 714.6,155.5 715.0,155.1 715.3,155.3 715.6,155.5 716.0,155.2 716.3,155.3 716.6,155.4 717.0,155.1 717.3,155.4 717.6,155.5 717.9,155.4 718.3,155.4 718.6,155.4 718.9,155.0 719.3,155.5 719.6,155.0 719.9,154.6 720.3,154.9 720.6,154.6 720.9,154.7 721.3,154.7 721.6,155.0 721.9,154.6 722.2,154.2 722.6,154.1 722.9,154.6 723.2,154.4 723.6,154.2 723.9,154.2 724.2,154.1 724.6,153.8 724.9,154.1 725.2,154.2 725.6,154.7 725.9,154.5 726.2,154.5 726.5,154.7 726.9,154.6 727.2,154.1 727.5,154.7 727.9,154.8 728.2,154.2 728.5,154.3 728.9,154.6 729.2,154.5 729.5,154.5 729.9,154.3 730.2,154.2 730.5,154.0 730.8,154.3 731.2,154.4 731.5,154.4 731.8,154.1 732.2,154.6 732.5,154.8 732.8,154.7 733.2,154.5 733.5,154.7 733.8,154.7 734.2,155.2 734.5,154.8 734.8,154.7 735.2,154.7 735.5,154.2 735.8,153.9 736.1,154.2 736.5,154.5 736.8,154.1 737.1,154.2 737.5,154.3 737.8,154.3 738.1,154.4 738.5,154.7 738.8,154.7 739.1,154.6 739.5,154.4 739.8,154.4 740.1,154.7 740.4,155.1 740.8,154.9 741.1,155.2 741.4,154.9 741.8,155.2 742.1,155.4 742.4,154.7 742.8,154.4 743.1,154.3 743.4,154.2 743.8,154.3 744.1,154.5 744.4,154.1 744.7,154.2 745.1,154.6 745.4,154.3 745.7,154.5 746.1,153.9 746.4,154.0 746.7,154.1 747.1,153.6 747.4,153.9 747.7,153.9 748.1,153.8 748.4,153.7 748.7,153.9 749.0,153.6 749.4,153.7 749.7,153.3 750.0,153.6 750.4,153.5 750.7,153.3 751.0,153.4 751.4,153.3 751.7,153.5 752.0,153.1 752.4,153.7 752.7,154.0 753.0,154.5 753.4,154.6 753.7,154.4 754.0,154.4 754.3,154.2 754.7,154.3 755.0,154.3 755.3,154.3 755.7,153.7 756.0,153.5 756.3,153.0 756.7,153.1 757.0,153.0 757.3,153.2 757.7,153.1 758.0,153.2 758.3,153.2 758.6,153.4 759.0,153.5 759.3,153.9 759.6,153.6 760.0,153.9 760.3,153.4 760.6,153.2 761.0,153.1 761.3,153.4 761.6,153.7 762.0,153.5 762.3,153.3 762.6,153.1 762.9,152.9 763.3,153.2 763.6,153.9 763.9,153.8 764.3,152.9 764.6,152.7 764.9,153.2 765.3,153.3 765.6,153.2 765.9,153.3 766.3,153.0 766.6,153.2 766.9,152.8 767.2,153.4 767.6,152.9 767.9,153.0 768.2,153.0 768.6,152.7 768.9,153.0 769.2,153.0 769.6,152.3 769.9,152.6 770.2,152.6 770.6,152.6 770.9,152.6 771.2,152.9 771.6,153.0 771.9,152.7 772.2,152.9 772.5,152.9 772.9,153.2 773.2,153.2 773.5,153.5 773.9,153.2 774.2,153.2 774.5,152.9 774.9,153.3 775.2,152.7 775.5,152.8 775.9,153.0 776.2,153.0 776.5,152.5 776.8,152.8 777.2,153.3 777.5,153.0 777.8,153.0 778.2,153.5 778.5,153.1 778.8,152.6 779.2,152.3 779.5,152.4 779.8,151.8 780.2,151.6 780.5,151.8 780.8,151.9 781.1,151.3 781.5,152.3 781.8,151.9 782.1,151.8 782.5,151.8 782.8,152.1 783.1,151.7 783.5,151.8 783.8,151.8 784.1,151.9 784.5,151.7 784.8,151.6 785.1,151.6 785.4,151.5 785.8,151.9 786.1,152.0 786.4,151.8 786.8,151.7 787.1,150.7 787.4,151.0 787.8,151.4 788.1,151.6 788.4,151.7 788.8,151.2 789.1,151.3 789.4,151.1 789.7,151.4 790.1,151.6 790.4,151.5 790.7,151.6 791.1,151.3 791.4,151.7 791.7,152.2 792.1,152.0 792.4,151.9 792.7,151.8 793.1,151.7 793.4,151.5 793.7,152.0 794.1,151.3 794.4,151.1 794.7,151.0 795.0,151.0 795.4,151.0 795.7,151.0 796.0,151.1 796.4,150.7 796.7,150.7 797.0,151.2 797.4,151.4 797.7,151.2 798.0,151.0 798.4,151.1 798.7,151.3 799.0,151.0 799.3,151.2 799.7,150.9 800.0,151.0 800.3,150.9 800.7,150.9 801.0,151.0 801.3,151.0 801.7,150.8 802.0,150.5 802.3,150.1 802.7,150.0 803.0,149.8 803.3,149.9 803.6,150.0 804.0,149.5 804.3,149.6 804.6,149.9 805.0,149.8 805.3,150.0 805.6,150.0 806.0,149.9 806.3,150.0 806.6,149.6 807.0,149.8 807.3,149.7 807.6,149.4 807.9,149.7 808.3,149.1 808.6,148.8 808.9,149.2 809.3,149.3 809.6,149.5 809.9,149.5 810.3,149.8 810.6,150.2 810.9,149.6 811.3,149.9 811.6,149.9 811.9,149.9 812.3,149.6 812.6,149.8 812.9,149.6 813.2,149.8 813.6,150.2 813.9,150.4 814.2,150.6 814.6,151.1 814.9,151.2 815.2,151.5 815.6,151.5 815.9,152.2 816.2,152.1 816.6,152.3 816.9,152.5 817.2,152.5 817.5,152.1 817.9,152.0 818.2,152.4 818.5,152.8 818.9,153.1 819.2,153.2 819.5,153.4 819.9,153.7 820.2,154.2 820.5,154.1 820.9,154.4 821.2,154.9 821.5,154.8 821.8,155.1 822.2,155.1 822.5,155.4 822.8,155.1 823.2,155.5 823.5,155.9 823.8,155.9 824.2,156.1 824.5,156.2 824.8,156.1 825.2,156.4 825.5,156.7 825.8,156.8 826.1,157.1 826.5,157.1 826.8,157.3 827.1,157.4 827.5,157.3 827.8,158.3 828.1,158.2 828.5,158.2 828.8,158.2 829.1,158.3 829.5,158.4 829.8,159.0 830.1,158.8 830.5,159.0 830.8,158.7 831.1,159.0 831.4,158.6 831.8,159.1 832.1,158.6 832.4,158.7 832.8,158.2 833.1,158.1 833.4,158.1 833.8,158.4 834.1,158.1 834.4,158.3 834.8,157.6 835.1,157.8 835.4,157.7 835.7,158.6 836.1,158.2 836.4,157.8 836.7,157.8 837.1,158.0 837.4,158.0 837.7,158.3 838.1,158.2 838.4,158.1 838.7,158.1 839.1,158.6 839.4,158.5 839.7,158.6 840.0,158.8 840.4,158.7 840.7,159.0 841.0,159.0 841.4,159.2 841.7,159.1 842.0,158.7 842.4,158.1 842.7,158.1 843.0,158.1 843.4,158.3 843.7,157.9 844.0,157.7 844.3,157.1 844.7,157.0 845.0,157.3 845.3,157.7 845.7,157.8 846.0,157.5 846.3,157.4 846.7,158.0 847.0,157.8 847.3,158.4 847.7,158.4 848.0,158.8 848.3,158.4 848.6,158.5 849.0,158.2 849.3,158.4 849.6,158.1 850.0,157.6 850.3,158.4 850.6,158.3 851.0,157.8 851.3,157.4 851.6,157.6 852.0,157.5 852.3,157.6 852.6,157.8 853.0,157.6 853.3,157.4 853.6,156.7 853.9,156.9 854.3,157.2 854.6,156.6 854.9,156.8 855.3,156.7 855.6,156.0 855.9,156.3 856.3,156.0 856.6,155.7 856.9,155.5 857.3,155.1 857.6,155.2 857.9,155.1 858.2,154.8 858.6,154.8 858.9,154.7 859.2,155.3 859.6,155.3 859.9,155.3 860.2,155.7 860.6,155.9 860.9,155.8 861.2,155.8 861.6,155.7 861.9,155.1 862.2,154.8 862.5,155.3 862.9,155.3 863.2,154.8 863.5,155.0 863.9,154.6 864.2,154.5 864.5,154.4 864.9,154.8 865.2,154.4 865.5,154.4 865.9,154.2 866.2,153.9 866.5,153.9 866.8,154.4 867.2,154.2 867.5,153.9 867.8,153.8 868.2,154.0 868.5,154.1 868.8,153.8 869.2,153.6 869.5,153.6 869.8,153.2 870.2,153.1 870.5,153.3 870.8,153.3 871.2,152.9 871.5,152.9 871.8,152.8 872.1,153.0 872.5,152.7 872.8,153.2 873.1,153.0 873.5,152.7 873.8,152.7 874.1,152.7 874.5,153.0" stroke="#EDB120" stroke-width="0.9" marker-start="url(#mor)" marker-mid="url(#mor)"/>
<polyline points="80.3,289.0 80.6,286.8 81.0,288.4 81.3,286.4 81.6,286.1 82.0,283.9 82.3,286.5 82.6,286.1 82.9,286.6 83.3,286.2 83.6,282.4 83.9,265.8 84.3,266.5 84.6,271.0 84.9,278.2 85.3,269.9 85.6,260.2 85.9,277.0 86.3,257.1 86.6,250.1 86.9,270.4 87.2,242.2 87.6,268.8 87.9,255.8 88.2,260.4 88.6,262.7 88.9,271.6 89.2,267.6 89.6,275.4 89.9,274.9 90.2,283.2 90.6,285.2 90.9,278.7 91.2,279.0 91.6,270.6 91.9,264.0 92.2,277.7 92.5,254.2 92.9,275.8 93.2,257.0 93.5,287.0 93.9,261.9 94.2,273.6 94.5,270.2 94.9,261.0 95.2,268.5 95.5,255.6 95.9,261.0 96.2,256.6 96.5,263.6 96.8,275.9 97.2,271.2 97.5,282.4 97.8,283.2 98.2,261.2 98.5,272.0 98.8,263.3 99.2,269.6 99.5,282.0 99.8,260.1 100.2,270.1 100.5,270.8 100.8,276.4 101.1,269.1 101.5,274.7 101.8,272.2 102.1,281.7 102.5,280.4 102.8,234.6 103.1,271.2 103.5,277.4 103.8,268.7 104.1,278.1 104.5,274.9 104.8,276.6 105.1,271.9 105.4,274.4 105.8,275.8 106.1,258.9 106.4,263.7 106.8,262.7 107.1,283.3 107.4,273.8 107.8,267.7 108.1,272.9 108.4,267.1 108.8,265.2 109.1,277.7 109.4,268.8 109.8,282.8 110.1,273.7 110.4,273.1 110.7,252.0 111.1,272.0 111.4,268.1 111.7,282.6 112.1,287.0 112.4,262.2 112.7,274.0 113.1,276.9 113.4,264.1 113.7,266.4 114.1,267.9 114.4,250.3 114.7,270.0 115.0,271.3 115.4,270.9 115.7,272.2 116.0,273.4 116.4,287.0 116.7,273.0 117.0,277.6 117.4,267.4 117.7,274.5 118.0,269.4 118.4,271.0 118.7,264.3 119.0,260.6 119.3,275.3 119.7,277.2 120.0,275.1 120.3,252.3 120.7,273.9 121.0,248.6 121.3,278.2 121.7,271.2 122.0,273.6 122.3,280.0 122.7,268.4 123.0,279.0 123.3,269.0 123.6,268.0 124.0,270.2 124.3,276.1 124.6,283.9 125.0,269.0 125.3,269.5 125.6,249.7 126.0,276.9 126.3,287.0 126.6,269.6 127.0,256.5 127.3,268.5 127.6,260.1 127.9,268.8 128.3,269.2 128.6,264.8 128.9,267.1 129.3,256.5 129.6,264.8 129.9,266.4 130.3,280.4 130.6,280.2 130.9,259.9 131.3,269.9 131.6,273.5 131.9,278.2 132.3,258.0 132.6,266.6 132.9,270.9 133.2,271.8 133.6,273.9 133.9,272.1 134.2,261.2 134.6,278.5 134.9,273.5 135.2,272.7 135.6,276.6 135.9,276.9 136.2,254.1 136.6,245.5 136.9,266.0 137.2,272.4 137.5,264.9 137.9,263.5 138.2,278.0 138.5,271.4 138.9,269.1 139.2,269.2 139.5,272.4 139.9,264.5 140.2,251.2 140.5,264.6 140.9,246.1 141.2,272.0 141.5,281.4 141.8,264.4 142.2,285.2 142.5,273.1 142.8,275.7 143.2,267.8 143.5,263.5 143.8,281.8 144.2,270.5 144.5,271.4 144.8,279.8 145.2,283.5 145.5,258.5 145.8,270.0 146.1,271.2 146.5,283.6 146.8,287.0 147.1,270.0 147.5,265.2 147.8,276.2 148.1,268.5 148.5,267.0 148.8,276.0 149.1,263.8 149.5,233.5 149.8,257.9 150.1,272.0 150.5,271.8 150.8,250.5 151.1,254.7 151.4,265.5 151.8,240.6 152.1,274.7 152.4,277.9 152.8,244.2 153.1,276.2 153.4,259.2 153.8,280.9 154.1,266.9 154.4,269.9 154.8,272.8 155.1,278.5 155.4,273.9 155.7,273.3 156.1,260.9 156.4,264.0 156.7,261.7 157.1,285.8 157.4,273.7 157.7,273.3 158.1,268.6 158.4,278.4 158.7,272.0 159.1,267.4 159.4,276.2 159.7,284.4 160.0,268.9 160.4,263.6 160.7,270.0 161.0,247.2 161.4,286.0 161.7,270.4 162.0,277.7 162.4,259.6 162.7,267.4 163.0,278.4 163.4,273.8 163.7,249.5 164.0,285.5 164.3,276.0 164.7,269.4 165.0,266.2 165.3,269.4 165.7,262.3 166.0,265.2 166.3,270.5 166.7,264.9 167.0,280.2 167.3,268.9 167.7,277.6 168.0,272.1 168.3,266.8 168.7,276.3 169.0,276.2 169.3,261.4 169.6,276.1 170.0,286.5 170.3,268.8 170.6,275.5 171.0,259.3 171.3,274.3 171.6,266.0 172.0,276.5 172.3,270.9 172.6,261.0 173.0,279.1 173.3,270.0 173.6,262.9 173.9,272.2 174.3,263.5 174.6,274.6 174.9,269.4 175.3,263.0 175.6,276.5 175.9,257.8 176.3,278.7 176.6,254.6 176.9,261.4 177.3,273.7 177.6,270.6 177.9,266.5 178.2,276.3 178.6,268.6 178.9,271.6 179.2,271.6 179.6,269.3 179.9,271.1 180.2,275.7 180.6,271.6 180.9,271.9 181.2,255.3 181.6,273.2 181.9,277.9 182.2,282.9 182.5,265.3 182.9,272.5 183.2,258.8 183.5,277.5 183.9,283.6 184.2,273.6 184.5,275.1 184.9,277.3 185.2,262.8 185.5,266.8 185.9,269.3 186.2,272.7 186.5,274.1 186.8,267.9 187.2,271.9 187.5,265.9 187.8,270.4 188.2,273.5 188.5,277.3 188.8,272.0 189.2,274.9 189.5,278.1 189.8,272.6 190.2,277.4 190.5,258.4 190.8,273.8 191.2,259.2 191.5,266.0 191.8,263.9 192.1,282.2 192.5,270.0 192.8,261.2 193.1,265.8 193.5,272.3 193.8,271.7 194.1,266.5 194.5,279.9 194.8,259.4 195.1,278.6 195.5,287.0 195.8,266.3 196.1,275.0 196.4,261.3 196.8,275.0 197.1,260.0 197.4,279.6 197.8,271.4 198.1,259.4 198.4,264.3 198.8,261.7 199.1,273.3 199.4,281.3 199.8,272.1 200.1,257.2 200.4,267.8 200.7,275.9 201.1,253.0 201.4,262.6 201.7,275.3 202.1,252.5 202.4,283.1 202.7,260.1 203.1,273.2 203.4,283.4 203.7,260.6 204.1,258.9 204.4,253.3 204.7,266.1 205.0,274.7 205.4,271.3 205.7,271.6 206.0,271.7 206.4,274.4 206.7,268.4 207.0,278.3 207.4,254.2 207.7,267.1 208.0,287.0 208.4,265.1 208.7,281.4 209.0,270.1 209.4,279.1 209.7,257.6 210.0,282.4 210.3,286.0 210.7,255.3 211.0,287.0 211.3,264.0 211.7,268.0 212.0,253.5 212.3,272.6 212.7,286.3 213.0,274.1 213.3,279.6 213.7,260.3 214.0,239.8 214.3,242.2 214.6,274.0 215.0,280.4 215.3,274.7 215.6,263.4 216.0,252.1 216.3,258.9 216.6,255.3 217.0,283.2 217.3,276.1 217.6,275.9 218.0,274.9 218.3,281.3 218.6,273.5 218.9,255.9 219.3,275.5 219.6,245.6 219.9,255.1 220.3,283.2 220.6,281.3 220.9,270.1 221.3,273.7 221.6,275.0 221.9,273.6 222.3,267.8 222.6,254.9 222.9,269.2 223.2,270.6 223.6,270.4 223.9,269.8 224.2,279.7 224.6,261.3 224.9,273.8 225.2,268.1 225.6,265.2 225.9,282.4 226.2,271.2 226.6,264.9 226.9,270.2 227.2,264.9 227.6,277.9 227.9,279.6 228.2,245.0 228.5,264.4 228.9,272.6 229.2,286.2 229.5,271.9 229.9,282.1 230.2,281.2 230.5,251.8 230.9,281.4 231.2,278.1 231.5,278.7 231.9,284.2 232.2,275.4 232.5,272.5 232.8,276.1 233.2,268.5 233.5,256.2 233.8,239.6 234.2,283.8 234.5,266.6 234.8,270.9 235.2,273.7 235.5,272.3 235.8,272.5 236.2,272.3 236.5,257.0 236.8,267.1 237.1,280.3 237.5,262.8 237.8,262.5 238.1,286.7 238.5,280.3 238.8,277.5 239.1,271.7 239.5,268.0 239.8,277.2 240.1,275.9 240.5,271.4 240.8,259.1 241.1,265.9 241.4,259.0 241.8,283.4 242.1,269.3 242.4,271.4 242.8,274.8 243.1,273.0 243.4,276.5 243.8,267.4 244.1,259.2 244.4,284.7 244.8,266.4 245.1,249.6 245.4,265.5 245.8,267.7 246.1,272.7 246.4,277.6 246.7,262.9 247.1,267.0 247.4,266.2 247.7,280.5 248.1,260.9 248.4,272.7 248.7,258.1 249.1,256.1 249.4,272.7 249.7,273.0 250.1,264.7 250.4,270.1 250.7,271.2 251.0,273.8 251.4,268.4 251.7,270.3 252.0,275.3 252.4,267.8 252.7,277.8 253.0,277.4 253.4,280.3 253.7,258.9 254.0,260.0 254.4,245.5 254.7,278.5 255.0,252.8 255.3,272.7 255.7,278.0 256.0,255.5 256.3,261.9 256.7,270.3 257.0,277.2 257.3,258.6 257.7,274.0 258.0,270.9 258.3,272.1 258.7,271.9 259.0,279.3 259.3,271.7 259.6,269.6 260.0,266.5 260.3,270.3 260.6,266.7 261.0,274.1 261.3,270.2 261.6,277.6 262.0,262.5 262.3,240.1 262.6,272.5 263.0,273.1 263.3,278.1 263.6,273.1 263.9,276.6 264.3,283.8 264.6,276.1 264.9,260.9 265.3,257.5 265.6,274.9 265.9,266.9 266.3,269.7 266.6,261.1 266.9,279.2 267.3,278.5 267.6,259.8 267.9,271.9 268.3,267.2 268.6,258.1 268.9,274.7 269.2,269.0 269.6,273.7 269.9,287.0 270.2,280.4 270.6,279.2 270.9,268.4 271.2,261.9 271.6,281.0 271.9,270.4 272.2,271.3 272.6,270.3 272.9,268.5 273.2,287.0 273.5,271.7 273.9,272.2 274.2,276.3 274.5,274.2 274.9,256.1 275.2,240.7 275.5,270.4 275.9,271.4 276.2,268.5 276.5,266.5 276.9,266.8 277.2,271.4 277.5,264.7 277.8,259.8 278.2,236.1 278.5,276.3 278.8,272.5 279.2,261.3 279.5,270.2 279.8,273.2 280.2,275.3 280.5,243.2 280.8,278.3 281.2,269.5 281.5,275.2 281.8,264.9 282.1,266.1 282.5,266.8 282.8,266.6 283.1,279.1 283.5,269.4 283.8,261.7 284.1,268.1 284.5,276.9 284.8,274.9 285.1,269.8 285.5,271.3 285.8,272.6 286.1,272.9 286.5,265.5 286.8,269.8 287.1,275.1 287.4,274.1 287.8,261.3 288.1,248.1 288.4,267.9 288.8,266.2 289.1,279.1 289.4,282.4 289.8,253.1 290.1,283.1 290.4,269.2 290.8,269.2 291.1,260.1 291.4,273.4 291.7,267.7 292.1,272.5 292.4,275.3 292.7,269.7 293.1,261.8 293.4,271.5 293.7,265.0 294.1,272.0 294.4,276.4 294.7,269.6 295.1,269.0 295.4,272.8 295.7,278.8 296.0,270.3 296.4,257.4 296.7,267.1 297.0,273.9 297.4,277.2 297.7,276.7 298.0,269.4 298.4,272.8 298.7,268.8 299.0,272.7 299.4,268.9 299.7,263.0 300.0,279.2 300.3,273.4 300.7,281.0 301.0,268.3 301.3,254.4 301.7,269.4 302.0,256.7 302.3,261.7 302.7,249.2 303.0,274.1 303.3,257.6 303.7,267.3 304.0,264.6 304.3,269.3 304.7,260.0 305.0,249.9 305.3,286.7 305.6,271.3 306.0,266.9 306.3,277.9 306.6,279.0 307.0,277.8 307.3,277.5 307.6,279.4 308.0,280.5 308.3,257.2 308.6,265.2 309.0,275.5 309.3,270.7 309.6,277.8 309.9,262.6 310.3,280.8 310.6,286.9 310.9,277.8 311.3,279.7 311.6,277.7 311.9,276.9 312.3,276.2 312.6,262.5 312.9,276.3 313.3,262.7 313.6,262.1 313.9,276.8 314.2,275.4 314.6,276.6 314.9,259.5 315.2,278.2 315.6,263.9 315.9,268.7 316.2,276.7 316.6,279.6 316.9,279.1 317.2,255.2 317.6,264.7 317.9,273.8 318.2,264.2 318.5,287.0 318.9,266.1 319.2,266.2 319.5,266.8 319.9,269.2 320.2,252.5 320.5,272.3 320.9,264.9 321.2,269.2 321.5,254.3 321.9,266.1 322.2,272.8 322.5,273.6 322.8,264.5 323.2,268.1 323.5,266.9 323.8,275.5 324.2,273.2 324.5,263.5 324.8,273.0 325.2,268.4 325.5,277.4 325.8,266.5 326.2,276.7 326.5,246.0 326.8,268.3 327.2,271.3 327.5,277.5 327.8,256.5 328.1,275.4 328.5,262.7 328.8,255.7 329.1,236.1 329.5,253.1 329.8,270.2 330.1,270.8 330.5,253.7 330.8,277.4 331.1,280.6 331.5,269.5 331.8,275.8 332.1,281.1 332.4,276.7 332.8,275.6 333.1,274.0 333.4,265.1 333.8,256.0 334.1,260.7 334.4,267.4 334.8,259.7 335.1,267.7 335.4,276.3 335.8,268.7 336.1,245.8 336.4,287.0 336.7,277.2 337.1,268.1 337.4,261.1 337.7,273.0 338.1,277.4 338.4,264.0 338.7,281.5 339.1,259.4 339.4,270.0 339.7,271.6 340.1,270.3 340.4,255.4 340.7,287.0 341.0,269.4 341.4,275.6 341.7,273.1 342.0,252.7 342.4,267.9 342.7,274.3 343.0,279.2 343.4,269.7 343.7,270.8 344.0,269.8 344.4,276.9 344.7,251.0 345.0,277.0 345.4,248.4 345.7,249.2 346.0,237.5 346.3,263.8 346.7,277.2 347.0,287.0 347.3,267.1 347.7,266.7 348.0,269.5 348.3,275.4 348.7,268.6 349.0,272.4 349.3,270.8 349.7,263.4 350.0,279.8 350.3,286.3 350.6,281.0 351.0,279.5 351.3,264.2 351.6,276.1 352.0,266.4 352.3,287.0 352.6,268.7 353.0,276.9 353.3,266.6 353.6,279.7 354.0,275.2 354.3,270.4 354.6,265.6 354.9,263.3 355.3,283.4 355.6,279.3 355.9,271.4 356.3,272.1 356.6,248.2 356.9,243.2 357.3,255.2 357.6,266.1 357.9,270.5 358.3,244.2 358.6,277.7 358.9,276.1 359.2,274.0 359.6,257.7 359.9,271.4 360.2,267.1 360.6,262.4 360.9,250.7 361.2,286.0 361.6,277.7 361.9,264.1 362.2,284.1 362.6,281.0 362.9,276.6 363.2,252.6 363.6,278.7 363.9,283.2 364.2,273.8 364.5,255.4 364.9,277.0 365.2,247.8 365.5,272.1 365.9,269.3 366.2,272.8 366.5,271.3 366.9,275.4 367.2,273.9 367.5,273.7 367.9,272.2 368.2,276.5 368.5,269.1 368.8,275.2 369.2,259.3 369.5,275.6 369.8,277.5 370.2,263.7 370.5,271.2 370.8,270.4 371.2,273.9 371.5,267.2 371.8,248.6 372.2,276.7 372.5,274.9 372.8,277.8 373.1,286.8 373.5,248.7 373.8,273.8 374.1,262.0 374.5,236.2 374.8,271.9 375.1,277.1 375.5,275.5 375.8,255.1 376.1,267.0 376.5,280.9 376.8,262.1 377.1,276.1 377.4,282.4 377.8,275.1 378.1,275.7 378.4,280.3 378.8,272.8 379.1,270.1 379.4,268.4 379.8,278.9 380.1,258.8 380.4,282.1 380.8,268.0 381.1,268.5 381.4,267.7 381.7,273.8 382.1,265.8 382.4,278.7 382.7,274.8 383.1,263.8 383.4,246.3 383.7,256.6 384.1,282.7 384.4,272.6 384.7,274.2 385.1,269.5 385.4,275.9 385.7,256.3 386.1,255.6 386.4,258.8 386.7,273.7 387.0,278.0 387.4,276.5 387.7,270.3 388.0,262.2 388.4,264.2 388.7,271.1 389.0,273.4 389.4,272.9 389.7,269.3 390.0,266.9 390.4,267.8 390.7,261.2 391.0,274.2 391.3,270.6 391.7,279.0 392.0,233.5 392.3,279.7 392.7,258.3 393.0,269.4 393.3,263.3 393.7,263.2 394.0,256.9 394.3,277.4 394.7,268.8 395.0,276.1 395.3,276.9 395.6,266.1 396.0,268.4 396.3,267.2 396.6,278.0 397.0,271.0 397.3,271.0 397.6,275.0 398.0,268.4 398.3,285.0 398.6,259.7 399.0,278.4 399.3,279.4 399.6,257.0 399.9,274.8 400.3,264.7 400.6,274.8 400.9,256.3 401.3,269.9 401.6,251.4 401.9,265.2 402.3,279.7 402.6,261.9 402.9,238.4 403.3,256.1 403.6,258.7 403.9,277.2 404.3,263.0 404.6,254.9 404.9,277.9 405.2,271.2 405.6,271.7 405.9,261.4 406.2,279.9 406.6,267.3 406.9,249.6 407.2,257.4 407.6,255.9 407.9,266.5 408.2,274.2 408.6,261.1 408.9,262.4 409.2,286.1 409.5,236.6 409.9,263.7 410.2,269.3 410.5,257.4 410.9,273.7 411.2,277.3 411.5,264.5 411.9,277.9 412.2,267.6 412.5,272.7 412.9,263.7 413.2,263.2 413.5,256.8 413.8,250.5 414.2,268.1 414.5,257.1 414.8,260.2 415.2,259.7 415.5,264.5 415.8,274.0 416.2,272.5 416.5,268.5 416.8,272.2 417.2,283.6 417.5,270.5 417.8,285.6 418.1,273.0 418.5,280.1 418.8,264.6 419.1,278.8 419.5,258.3 419.8,271.4 420.1,265.3 420.5,250.3 420.8,256.2 421.1,278.1 421.5,256.8 421.8,279.2 422.1,270.4 422.5,241.2 422.8,270.7 423.1,263.3 423.4,263.9 423.8,246.3 424.1,255.1 424.4,259.7 424.8,278.6 425.1,272.5 425.4,263.1 425.8,255.1 426.1,277.1 426.4,272.8 426.8,271.5 427.1,258.8 427.4,266.3 427.7,259.8 428.1,252.5 428.4,276.8 428.7,267.0 429.1,256.1 429.4,260.9 429.7,275.5 430.1,274.0 430.4,274.0 430.7,276.5 431.1,257.8 431.4,270.7 431.7,270.8 432.0,280.4 432.4,268.9 432.7,259.6 433.0,267.7 433.4,251.9 433.7,279.4 434.0,273.0 434.4,270.3 434.7,268.9 435.0,264.3 435.4,262.5 435.7,254.4 436.0,248.9 436.3,276.5 436.7,270.7 437.0,271.7 437.3,266.5 437.7,279.9 438.0,256.3 438.3,275.8 438.7,257.2 439.0,260.8 439.3,253.2 439.7,265.8 440.0,262.1 440.3,268.6 440.7,259.1 441.0,251.2 441.3,269.8 441.6,276.1 442.0,261.4 442.3,261.1 442.6,268.6 443.0,248.6 443.3,242.0 443.6,275.1 444.0,269.1 444.3,256.7 444.6,272.4 445.0,263.6 445.3,271.2 445.6,251.1 445.9,259.7 446.3,267.8 446.6,267.7 446.9,270.1 447.3,265.4 447.6,263.8 447.9,262.2 448.3,279.6 448.6,251.6 448.9,263.2 449.3,264.2 449.6,267.4 449.9,274.3 450.2,252.5 450.6,258.6 450.9,247.7 451.2,232.9 451.6,258.7 451.9,253.2 452.2,250.0 452.6,257.5 452.9,258.9 453.2,259.3 453.6,228.8 453.9,247.5 454.2,257.0 454.5,266.3 454.9,270.8 455.2,287.0 455.5,262.1 455.9,253.1 456.2,262.6 456.5,267.2 456.9,261.9 457.2,249.7 457.5,259.0 457.9,259.3 458.2,245.3 458.5,247.0 458.8,256.1 459.2,236.1 459.5,260.1 459.8,255.7 460.2,271.8 460.5,259.8 460.8,249.7 461.2,270.5 461.5,253.1 461.8,277.5 462.2,274.3 462.5,258.0 462.8,265.8 463.2,260.1 463.5,248.9 463.8,267.7 464.1,261.1 464.5,264.8 464.8,266.5 465.1,269.6 465.5,265.2 465.8,252.8 466.1,254.0 466.5,257.1 466.8,250.7 467.1,249.0 467.5,272.5 467.8,256.3 468.1,272.5 468.4,241.6 468.8,248.9 469.1,244.3 469.4,244.5 469.8,222.3 470.1,246.7 470.4,243.1 470.8,270.6 471.1,255.9 471.4,238.9 471.8,260.6 472.1,256.2 472.4,253.3 472.7,239.1 473.1,257.9 473.4,229.6 473.7,239.7 474.1,268.7 474.4,219.6 474.7,242.2 475.1,257.9 475.4,241.7 475.7,234.3 476.1,232.6 476.4,219.0 476.7,223.0 477.0,241.4 477.4,244.0 477.7,238.8 478.0,243.8 478.4,242.1 478.7,218.3 479.0,232.2 479.4,231.1 479.7,230.6 480.0,225.3 480.4,213.9 480.7,247.9 481.0,251.8 481.4,277.7 481.7,252.2 482.0,284.3 482.3,251.8 482.7,250.0 483.0,252.0 483.3,233.3 483.7,250.1 484.0,246.5 484.3,237.2 484.7,264.7 485.0,263.2 485.3,254.8 485.7,259.2 486.0,269.7 486.3,247.1 486.6,234.0 487.0,238.3 487.3,257.4 487.6,251.5 488.0,232.7 488.3,265.5 488.6,251.3 489.0,269.1 489.3,274.3 489.6,243.4 490.0,249.1 490.3,239.5 490.6,237.9 490.9,243.3 491.3,252.9 491.6,264.5 491.9,228.7 492.3,254.5 492.6,244.7 492.9,241.4 493.3,254.2 493.6,239.4 493.9,263.6 494.3,230.7 494.6,232.9 494.9,254.7 495.2,240.8 495.6,231.0 495.9,242.2 496.2,244.6 496.6,241.9 496.9,223.6 497.2,230.9 497.6,252.9 497.9,228.4 498.2,235.5 498.6,250.4 498.9,249.9 499.2,260.9 499.6,239.7 499.9,266.6 500.2,243.0 500.5,265.6 500.9,235.6 501.2,233.0 501.5,239.9 501.9,246.8 502.2,255.7 502.5,225.6 502.9,227.6 503.2,249.2 503.5,233.2 503.9,226.2 504.2,217.5 504.5,263.4 504.8,224.7 505.2,239.5 505.5,245.9 505.8,234.9 506.2,214.1 506.5,254.4 506.8,253.7 507.2,258.2 507.5,247.8 507.8,212.5 508.2,257.3 508.5,236.6 508.8,247.4 509.1,226.4 509.5,224.6 509.8,223.8 510.1,281.4 510.5,224.5 510.8,221.8 511.1,209.6 511.5,232.5 511.8,218.7 512.1,225.2 512.5,241.7 512.8,229.7 513.1,221.3 513.4,225.2 513.8,222.3 514.1,234.6 514.4,233.7 514.8,222.2 515.1,233.1 515.4,235.8 515.8,236.7 516.1,202.9 516.4,225.8 516.8,213.3 517.1,202.8 517.4,216.6 517.7,229.1 518.1,203.0 518.4,208.7 518.7,236.9 519.1,203.9 519.4,205.4 519.7,211.9 520.1,223.6 520.4,227.8 520.7,209.1 521.1,211.4 521.4,216.7 521.7,210.5 522.1,205.4 522.4,203.1 522.7,229.5 523.0,212.6 523.4,273.1 523.7,227.8 524.0,206.8 524.4,215.0 524.7,221.5 525.0,257.1 525.4,221.0 525.7,222.5 526.0,211.3 526.4,225.7 526.7,256.4 527.0,202.9 527.3,195.6 527.7,226.0 528.0,236.6 528.3,227.8 528.7,235.6 529.0,208.4 529.3,207.7 529.7,223.0 530.0,222.8 530.3,242.2 530.7,239.2 531.0,190.2 531.3,224.2 531.6,197.9 532.0,187.9 532.3,211.8 532.6,201.4 533.0,229.9 533.3,188.6 533.6,191.3 534.0,199.7 534.3,185.8 534.6,200.5 535.0,203.8 535.3,199.5 535.6,207.0 535.9,199.7 536.3,187.6 536.6,188.6 536.9,201.4 537.3,252.5 537.6,201.7 537.9,192.8 538.3,201.3 538.6,178.8 538.9,178.2 539.3,192.6 539.6,195.5 539.9,192.2 540.3,192.3 540.6,181.9 540.9,188.0 541.2,198.7 541.6,173.4 541.9,179.8 542.2,189.4 542.6,223.6 542.9,207.9 543.2,226.5 543.6,222.6 543.9,191.4 544.2,188.3 544.6,184.9 544.9,221.9 545.2,213.5 545.5,193.3 545.9,233.8 546.2,209.6 546.5,204.9 546.9,206.5 547.2,225.6 547.5,188.0 547.9,190.0 548.2,201.4 548.5,224.7 548.9,206.2 549.2,199.2 549.5,218.3 549.8,205.5 550.2,184.6 550.5,196.0 550.8,188.0 551.2,208.4 551.5,207.9 551.8,223.6 552.2,259.3 552.5,207.2 552.8,217.2 553.2,201.7 553.5,203.5 553.8,217.9 554.1,220.2 554.5,235.3 554.8,253.6 555.1,219.3 555.5,246.0 555.8,236.3 556.1,229.0 556.5,240.7 556.8,239.3 557.1,256.6 557.5,266.5 557.8,234.6 558.1,265.3 558.5,253.4 558.8,258.7 559.1,244.9 559.4,248.8 559.8,268.7 560.1,249.8 560.4,260.2 560.8,258.7 561.1,280.2 561.4,280.6 561.8,275.6 562.1,273.9 562.4,265.7 562.8,281.9 563.1,279.5 563.4,276.1 563.7,269.0 564.1,266.7 564.4,268.9 564.7,278.5 565.1,260.6 565.4,269.5 565.7,280.1 566.1,274.4 566.4,280.4 566.7,270.4 567.1,270.4 567.4,277.5 567.7,272.2 568.0,270.0 568.4,263.0 568.7,254.4 569.0,278.9 569.4,264.8 569.7,260.8 570.0,275.2 570.4,251.2 570.7,257.8 571.0,265.1 571.4,269.8 571.7,272.2 572.0,273.9 572.3,277.0 572.7,269.6 573.0,273.1 573.3,269.7 573.7,265.1 574.0,267.3 574.3,270.1 574.7,283.6 575.0,275.5 575.3,265.9 575.7,276.1 576.0,270.6 576.3,255.2 576.6,258.7 577.0,258.7 577.3,268.1 577.6,261.2 578.0,272.7 578.3,259.9 578.6,257.4 579.0,274.4 579.3,282.5 579.6,282.3 580.0,268.9 580.3,275.1 580.6,264.0 581.0,248.0 581.3,279.7 581.6,275.6 581.9,267.6 582.3,267.1 582.6,277.0 582.9,272.6 583.3,267.3 583.6,247.2 583.9,270.5 584.3,267.2 584.6,264.7 584.9,277.9 585.3,267.5 585.6,261.5 585.9,284.6 586.2,281.0 586.6,281.7 586.9,253.2 587.2,261.8 587.6,260.8 587.9,273.3 588.2,275.2 588.6,271.8 588.9,276.2 589.2,266.6 589.6,274.3 589.9,259.2 590.2,272.6 590.5,267.2 590.9,260.6 591.2,268.7 591.5,272.2 591.9,266.6 592.2,278.3 592.5,265.6 592.9,278.4 593.2,277.0 593.5,266.7 593.9,282.1 594.2,258.6 594.5,276.2 594.8,273.2 595.2,274.4 595.5,259.3 595.8,262.7 596.2,260.7 596.5,273.3 596.8,270.2 597.2,273.2 597.5,270.8 597.8,266.9 598.2,261.0 598.5,269.2 598.8,276.5 599.2,279.7 599.5,268.4 599.8,271.4 600.1,260.8 600.5,277.9 600.8,258.3 601.1,274.2 601.5,264.2 601.8,264.1 602.1,267.9 602.5,282.5 602.8,267.2 603.1,269.0 603.5,259.4 603.8,275.6 604.1,270.1 604.4,278.0 604.8,263.8 605.1,274.6 605.4,276.7 605.8,269.7 606.1,277.2 606.4,266.4 606.8,279.9 607.1,264.1 607.4,263.0 607.8,280.6 608.1,282.4 608.4,259.7 608.7,269.9 609.1,281.5 609.4,244.5 609.7,283.3 610.1,278.3 610.4,265.2 610.7,281.8 611.1,276.3 611.4,276.8 611.7,253.6 612.1,269.3 612.4,271.8 612.7,269.8 613.0,269.8 613.4,270.6 613.7,247.8 614.0,271.0 614.4,257.0 614.7,265.1 615.0,267.9 615.4,272.1 615.7,274.0 616.0,284.2 616.4,259.0 616.7,274.9 617.0,270.1 617.4,264.4 617.7,259.6 618.0,278.3 618.3,259.3 618.7,278.7 619.0,275.1 619.3,267.9 619.7,267.1 620.0,276.2 620.3,274.1 620.7,277.9 621.0,273.0 621.3,261.3 621.7,276.5 622.0,262.4 622.3,278.3 622.6,272.9 623.0,262.5 623.3,263.2 623.6,269.1 624.0,255.6 624.3,281.2 624.6,278.1 625.0,261.3 625.3,269.9 625.6,282.9 626.0,273.6 626.3,261.5 626.6,251.1 626.9,255.8 627.3,262.0 627.6,243.4 627.9,259.1 628.3,276.1 628.6,268.0 628.9,265.6 629.3,264.3 629.6,267.8 629.9,283.6 630.3,263.9 630.6,268.9 630.9,281.6 631.2,282.7 631.6,263.7 631.9,286.5 632.2,279.9 632.6,239.8 632.9,284.7 633.2,258.8 633.6,276.8 633.9,261.8 634.2,256.3 634.6,278.2 634.9,275.4 635.2,272.0 635.6,274.3 635.9,243.6 636.2,271.2 636.5,264.3 636.9,277.7 637.2,274.2 637.5,272.1 637.9,269.4 638.2,267.5 638.5,259.8 638.9,271.6 639.2,259.1 639.5,262.7 639.9,265.4 640.2,269.5 640.5,252.7 640.8,278.3 641.2,275.9 641.5,272.8 641.8,282.9 642.2,272.4 642.5,274.7 642.8,278.2 643.2,264.3 643.5,278.3 643.8,274.3 644.2,258.9 644.5,264.5 644.8,275.6 645.1,255.6 645.5,266.6 645.8,274.9 646.1,264.8 646.5,268.6 646.8,259.6 647.1,244.2 647.5,259.0 647.8,235.8 648.1,269.3 648.5,272.7 648.8,280.4 649.1,268.1 649.4,265.5 649.8,276.8 650.1,254.1 650.4,254.6 650.8,263.6 651.1,235.0 651.4,266.4 651.8,273.8 652.1,258.0 652.4,257.5 652.8,260.0 653.1,265.6 653.4,271.7 653.7,251.0 654.1,256.7 654.4,270.5 654.7,257.1 655.1,263.6 655.4,264.8 655.7,252.6 656.1,258.9 656.4,270.1 656.7,258.9 657.1,258.6 657.4,263.5 657.7,264.5 658.1,284.0 658.4,253.3 658.7,262.7 659.0,279.5 659.4,261.9 659.7,257.3 660.0,247.3 660.4,270.2 660.7,269.3 661.0,268.7 661.4,259.5 661.7,264.5 662.0,260.5 662.4,268.9 662.7,260.9 663.0,268.3 663.3,247.9 663.7,257.9 664.0,233.0 664.3,259.9 664.7,268.5 665.0,259.0 665.3,283.0 665.7,251.8 666.0,258.3 666.3,240.9 666.7,256.7 667.0,257.0 667.3,228.7 667.6,251.7 668.0,280.4 668.3,258.7 668.6,268.2 669.0,248.4 669.3,259.9 669.6,266.2 670.0,237.3 670.3,247.3 670.6,258.8 671.0,253.0 671.3,240.3 671.6,272.6 671.9,246.9 672.3,239.3 672.6,246.7 672.9,260.4 673.3,267.7 673.6,271.4 673.9,254.0 674.3,281.8 674.6,263.9 674.9,243.7 675.3,271.4 675.6,264.9 675.9,247.7 676.3,246.5 676.6,259.6 676.9,264.3 677.2,276.1 677.6,269.3 677.9,267.3 678.2,268.8 678.6,259.9 678.9,260.5 679.2,278.4 679.6,263.8 679.9,269.3 680.2,257.9 680.6,245.8 680.9,250.1 681.2,261.2 681.5,247.3 681.9,258.6 682.2,267.7 682.5,242.5 682.9,239.9 683.2,260.7 683.5,261.7 683.9,255.1 684.2,252.5 684.5,241.7 684.9,265.5 685.2,250.7 685.5,262.9 685.8,257.8 686.2,253.5 686.5,263.5 686.8,261.5 687.2,266.7 687.5,272.7 687.8,266.7 688.2,267.3 688.5,262.4 688.8,256.5 689.2,260.9 689.5,264.3 689.8,272.3 690.1,272.5 690.5,281.8 690.8,247.7 691.1,257.8 691.5,239.8 691.8,251.3 692.1,239.0 692.5,260.7 692.8,258.1 693.1,232.7 693.5,256.9 693.8,261.1 694.1,273.0 694.5,261.3 694.8,251.7 695.1,232.9 695.4,254.3 695.8,230.4 696.1,236.1 696.4,222.1 696.8,261.6 697.1,238.4 697.4,242.7 697.8,256.7 698.1,243.6 698.4,260.8 698.8,230.4 699.1,254.1 699.4,222.7 699.7,224.3 700.1,228.8 700.4,241.7 700.7,214.5 701.1,223.6 701.4,259.3 701.7,227.1 702.1,235.8 702.4,241.1 702.7,225.7 703.1,241.9 703.4,246.7 703.7,233.7 704.0,254.7 704.4,228.3 704.7,223.2 705.0,238.6 705.4,224.2 705.7,242.0 706.0,223.9 706.4,229.4 706.7,245.5 707.0,244.4 707.4,211.1 707.7,229.9 708.0,235.8 708.3,242.4 708.7,226.6 709.0,219.9 709.3,248.7 709.7,245.8 710.0,210.6 710.3,216.3 710.7,226.3 711.0,210.8 711.3,226.3 711.7,248.9 712.0,221.3 712.3,235.5 712.6,223.2 713.0,241.2 713.3,245.7 713.6,258.4 714.0,234.9 714.3,253.7 714.6,224.9 715.0,228.8 715.3,261.9 715.6,227.7 716.0,257.2 716.3,280.0 716.6,250.6 717.0,225.5 717.3,240.0 717.6,228.5 717.9,232.8 718.3,212.6 718.6,238.2 718.9,217.2 719.3,241.0 719.6,241.0 719.9,244.9 720.3,274.8 720.6,234.4 720.9,248.6 721.3,223.1 721.6,227.8 721.9,250.0 722.2,230.3 722.6,219.4 722.9,221.5 723.2,226.9 723.6,221.9 723.9,232.4 724.2,217.7 724.6,232.4 724.9,243.6 725.2,239.4 725.6,219.3 725.9,248.2 726.2,247.9 726.5,238.5 726.9,219.5 727.2,216.9 727.5,233.7 727.9,221.9 728.2,218.6 728.5,260.4 728.9,233.0 729.2,245.5 729.5,258.1 729.9,250.5 730.2,249.0 730.5,255.1 730.8,236.2 731.2,222.3 731.5,262.9 731.8,238.1 732.2,258.4 732.5,235.6 732.8,230.5 733.2,227.1 733.5,233.4 733.8,216.5 734.2,252.6 734.5,233.7 734.8,229.1 735.2,213.6 735.5,213.4 735.8,246.4 736.1,222.6 736.5,257.9 736.8,224.2 737.1,222.3 737.5,215.3 737.8,213.9 738.1,227.8 738.5,232.8 738.8,244.5 739.1,248.4 739.5,213.7 739.8,229.4 740.1,227.4 740.4,222.2 740.8,240.5 741.1,260.1 741.4,223.4 741.8,250.6 742.1,255.9 742.4,215.9 742.8,263.0 743.1,261.0 743.4,248.5 743.8,260.9 744.1,231.1 744.4,249.1 744.7,238.6 745.1,215.8 745.4,230.1 745.7,222.7 746.1,218.9 746.4,206.6 746.7,215.4 747.1,210.4 747.4,246.7 747.7,206.5 748.1,225.2 748.4,206.6 748.7,210.0 749.0,238.2 749.4,214.8 749.7,247.7 750.0,221.1 750.4,229.6 750.7,221.3 751.0,235.7 751.4,241.3 751.7,217.3 752.0,221.8 752.4,270.2 752.7,205.0 753.0,258.1 753.4,217.0 753.7,215.1 754.0,204.5 754.3,211.7 754.7,204.3 755.0,229.1 755.3,234.6 755.7,219.9 756.0,214.0 756.3,209.4 756.7,213.1 757.0,204.8 757.3,206.7 757.7,277.6 758.0,225.1 758.3,210.2 758.6,233.5 759.0,250.1 759.3,212.6 759.6,218.1 760.0,205.5 760.3,202.1 760.6,246.5 761.0,270.5 761.3,201.4 761.6,201.2 762.0,246.2 762.3,228.9 762.6,226.7 762.9,246.6 763.3,213.0 763.6,222.0 763.9,232.2 764.3,212.6 764.6,225.5 764.9,213.1 765.3,224.7 765.6,218.5 765.9,199.1 766.3,216.8 766.6,198.8 766.9,205.5 767.2,198.6 767.6,213.0 767.9,211.0 768.2,210.3 768.6,275.7 768.9,228.8 769.2,212.0 769.6,198.5 769.9,227.5 770.2,211.3 770.6,210.2 770.9,228.9 771.2,207.3 771.6,213.2 771.9,232.1 772.2,225.8 772.5,207.8 772.9,244.0 773.2,238.0 773.5,253.3 773.9,241.5 774.2,219.9 774.5,237.1 774.9,212.1 775.2,244.2 775.5,215.1 775.9,207.2 776.2,208.5 776.5,207.8 776.8,222.3 777.2,209.9 777.5,197.1 777.8,212.5 778.2,244.1 778.5,237.2 778.8,192.8 779.2,198.8 779.5,222.7 779.8,207.7 780.2,206.6 780.5,202.9 780.8,196.9 781.1,192.0 781.5,226.4 781.8,190.7 782.1,199.9 782.5,258.8 782.8,222.7 783.1,200.3 783.5,189.0 783.8,193.3 784.1,194.0 784.5,196.5 784.8,225.8 785.1,193.7 785.4,209.5 785.8,206.4 786.1,205.5 786.4,193.9 786.8,230.2 787.1,199.6 787.4,192.7 787.8,180.5 788.1,193.1 788.4,211.0 788.8,211.5 789.1,190.5 789.4,193.9 789.7,201.7 790.1,185.1 790.4,210.0 790.7,210.0 791.1,207.5 791.4,209.8 791.7,179.2 792.1,206.0 792.4,190.6 792.7,208.3 793.1,216.9 793.4,212.0 793.7,186.6 794.1,251.9 794.4,194.7 794.7,184.0 795.0,215.0 795.4,178.2 795.7,234.0 796.0,210.4 796.4,221.9 796.7,216.1 797.0,203.1 797.4,180.4 797.7,188.0 798.0,206.1 798.4,202.5 798.7,202.2 799.0,176.1 799.3,185.8 799.7,200.6 800.0,209.5 800.3,194.5 800.7,183.3 801.0,175.7 801.3,234.3 801.7,180.8 802.0,183.5 802.3,184.9 802.7,210.9 803.0,184.4 803.3,203.8 803.6,198.6 804.0,180.1 804.3,195.8 804.6,179.1 805.0,190.4 805.3,205.6 805.6,221.4 806.0,177.3 806.3,180.7 806.6,181.4 807.0,170.4 807.3,159.1 807.6,163.9 807.9,234.3 808.3,190.6 808.6,196.3 808.9,204.6 809.3,202.9 809.6,201.7 809.9,203.6 810.3,224.0 810.6,219.5 810.9,215.1 811.3,205.6 811.6,223.3 811.9,222.3 812.3,214.6 812.6,225.8 812.9,226.3 813.2,247.0 813.6,243.8 813.9,237.1 814.2,212.0 814.6,229.4 814.9,228.0 815.2,277.0 815.6,242.7 815.9,228.6 816.2,217.3 816.6,260.1 816.9,231.3 817.2,248.3 817.5,247.0 817.9,260.8 818.2,236.5 818.5,253.4 818.9,250.5 819.2,259.4 819.5,267.4 819.9,251.7 820.2,248.8 820.5,262.7 820.9,229.9 821.2,255.7 821.5,233.5 821.8,242.4 822.2,239.5 822.5,239.7 822.8,266.2 823.2,270.8 823.5,260.2 823.8,270.0 824.2,260.9 824.5,244.7 824.8,251.1 825.2,269.1 825.5,269.9 825.8,272.0 826.1,254.6 826.5,259.6 826.8,249.0 827.1,272.6 827.5,268.6 827.8,266.8 828.1,261.9 828.5,260.6 828.8,258.4 829.1,271.9 829.5,255.7 829.8,270.0 830.1,246.9 830.5,251.9 830.8,247.1 831.1,253.4 831.4,260.5 831.8,247.8 832.1,266.4 832.4,271.1 832.8,265.5 833.1,243.7 833.4,237.2 833.8,268.6 834.1,274.4 834.4,256.6 834.8,265.3 835.1,257.6 835.4,253.6 835.7,257.6 836.1,253.6 836.4,266.8 836.7,275.0 837.1,256.2 837.4,275.4 837.7,240.4 838.1,263.1 838.4,251.0 838.7,281.6 839.1,235.3 839.4,238.9 839.7,268.7 840.0,226.1 840.4,252.2 840.7,237.5 841.0,252.6 841.4,243.8 841.7,256.7 842.0,243.7 842.4,231.7 842.7,219.8 843.0,269.3 843.4,246.0 843.7,229.5 844.0,238.3 844.3,256.7 844.7,224.9 845.0,268.7 845.3,255.2 845.7,236.4 846.0,260.7 846.3,243.1 846.7,228.2 847.0,254.0 847.3,245.8 847.7,256.9 848.0,226.8 848.3,223.9 848.6,247.1 849.0,230.5 849.3,212.7 849.6,223.8 850.0,241.7 850.3,226.6 850.6,239.1 851.0,229.0 851.3,223.3 851.6,216.7 852.0,225.6 852.3,232.2 852.6,228.7 853.0,237.6 853.3,254.1 853.6,211.4 853.9,233.9 854.3,231.6 854.6,221.6 854.9,213.7 855.3,224.3 855.6,224.4 855.9,228.0 856.3,241.7 856.6,221.4 856.9,256.6 857.3,238.8 857.6,266.6 857.9,228.9 858.2,224.7 858.6,232.7 858.9,224.6 859.2,218.2 859.6,229.4 859.9,228.0 860.2,221.4 860.6,223.9 860.9,217.2 861.2,230.4 861.6,212.6 861.9,261.1 862.2,227.1 862.5,245.3 862.9,206.7 863.2,232.6 863.5,224.0 863.9,245.0 864.2,242.5 864.5,206.8 864.9,247.4 865.2,207.5 865.5,235.4 865.9,222.0 866.2,209.1 866.5,235.8 866.8,221.7 867.2,209.7 867.5,211.8 867.8,228.9 868.2,203.7 868.5,208.4 868.8,254.7 869.2,208.0 869.5,218.0 869.8,223.9 870.2,231.9 870.5,231.4 870.8,196.0 871.2,207.2 871.5,236.1 871.8,203.1 872.1,248.4 872.5,216.1 872.8,197.4 873.1,216.2 873.5,249.5 873.8,202.1 874.1,220.2 874.5,198.6" stroke="#33B6EC" stroke-width="1.1" marker-start="url(#mlb)" marker-mid="url(#mlb)"/>
<polyline points="80.3,289.0 80.6,287.9 81.0,288.0 81.3,287.6 81.6,287.3 82.0,286.3 82.3,286.3 82.6,285.8 82.9,285.9 83.3,285.9 83.6,285.6 83.9,281.4 84.3,277.5 84.6,274.4 84.9,272.8 85.3,270.3 85.6,269.2 85.9,271.3 86.3,268.5 86.6,262.9 86.9,263.0 87.2,259.4 87.6,257.7 87.9,257.5 88.2,259.5 88.6,258.0 88.9,263.9 89.2,263.6 89.6,267.5 89.9,270.4 90.2,274.5 90.6,277.3 90.9,279.5 91.2,280.2 91.6,279.3 91.9,275.5 92.2,274.0 92.5,269.1 92.9,268.5 93.2,265.8 93.5,270.4 93.9,267.2 94.2,271.0 94.5,269.9 94.9,270.7 95.2,267.0 95.5,265.8 95.9,263.3 96.2,260.5 96.5,261.1 96.8,262.5 97.2,265.7 97.5,269.9 97.8,275.3 98.2,274.8 98.5,274.0 98.8,272.4 99.2,269.8 99.5,269.6 99.8,269.4 100.2,269.0 100.5,270.5 100.8,271.9 101.1,269.3 101.5,272.2 101.8,272.7 102.1,274.8 102.5,275.6 102.8,268.7 103.1,268.0 103.5,269.1 103.8,266.5 104.1,266.0 104.5,274.1 104.8,275.1 105.1,274.0 105.4,275.2 105.8,274.7 106.1,271.5 106.4,269.0 106.8,267.1 107.1,268.9 107.4,268.5 107.8,270.2 108.1,272.1 108.4,272.9 108.8,269.3 109.1,270.1 109.4,270.3 109.8,272.3 110.1,273.6 110.4,275.2 110.7,270.1 111.1,270.7 111.4,267.8 111.7,269.6 112.1,272.3 112.4,274.4 112.7,274.8 113.1,276.5 113.4,272.9 113.7,268.7 114.1,269.9 114.4,265.1 114.7,263.7 115.0,265.2 115.4,266.1 115.7,267.0 116.0,271.6 116.4,275.0 116.7,275.3 117.0,276.6 117.4,275.7 117.7,275.9 118.0,272.4 118.4,272.0 118.7,269.3 119.0,268.0 119.3,268.1 119.7,269.7 120.0,270.5 120.3,268.1 120.7,270.8 121.0,265.4 121.3,265.6 121.7,264.8 122.0,269.1 122.3,270.3 122.7,274.3 123.0,274.4 123.3,274.0 123.6,272.9 124.0,270.9 124.3,272.5 124.6,273.4 125.0,273.4 125.3,273.7 125.6,269.6 126.0,269.8 126.3,270.4 126.6,270.5 127.0,267.9 127.3,271.7 127.6,268.4 127.9,264.7 128.3,264.6 128.6,266.3 128.9,266.0 129.3,265.3 129.6,264.5 129.9,263.9 130.3,267.1 130.6,269.7 130.9,270.4 131.3,271.4 131.6,272.8 131.9,272.3 132.3,267.9 132.6,269.2 132.9,269.4 133.2,269.1 133.6,268.2 133.9,271.1 134.2,270.0 134.6,271.5 134.9,271.8 135.2,271.6 135.6,272.5 135.9,275.6 136.2,270.8 136.6,265.2 136.9,263.8 137.2,263.0 137.5,260.6 137.9,262.5 138.2,269.0 138.5,270.0 138.9,269.4 139.2,270.3 139.5,272.0 139.9,269.3 140.2,265.3 140.5,264.4 140.9,259.7 141.2,259.7 141.5,263.0 141.8,265.7 142.2,269.8 142.5,275.2 142.8,276.0 143.2,273.3 143.5,273.1 143.8,272.4 144.2,271.9 144.5,271.0 144.8,273.4 145.2,277.4 145.5,272.7 145.8,272.6 146.1,272.6 146.5,273.3 146.8,274.0 147.1,276.3 147.5,275.4 147.8,276.4 148.1,273.4 148.5,269.4 148.8,270.6 149.1,270.3 149.5,261.8 149.8,259.7 150.1,260.7 150.5,259.8 150.8,257.2 151.1,261.4 151.4,262.9 151.8,256.6 152.1,257.2 152.4,262.7 152.8,260.6 153.1,262.7 153.4,266.5 153.8,267.7 154.1,265.5 154.4,270.6 154.8,269.9 155.1,273.8 155.4,272.4 155.7,273.7 156.1,271.9 156.4,270.1 156.7,266.8 157.1,269.1 157.4,269.2 157.7,271.7 158.1,272.6 158.4,275.9 158.7,273.2 159.1,271.9 159.4,272.5 159.7,275.7 160.0,273.8 160.4,272.1 160.7,272.6 161.0,266.8 161.4,267.1 161.7,267.4 162.0,270.3 162.4,268.2 162.7,272.2 163.0,270.7 163.4,271.4 163.7,265.7 164.0,270.9 164.3,272.6 164.7,270.8 165.0,269.3 165.3,273.3 165.7,268.7 166.0,266.5 166.3,266.7 166.7,266.5 167.0,268.6 167.3,269.9 167.7,272.4 168.0,272.7 168.3,273.1 168.7,272.4 169.0,273.8 169.3,270.6 169.6,271.4 170.0,275.3 170.3,273.8 170.6,273.7 171.0,273.2 171.3,272.9 171.6,268.8 172.0,270.3 172.3,269.4 172.6,269.7 173.0,270.7 173.3,271.5 173.6,268.8 173.9,269.1 174.3,269.5 174.6,268.6 174.9,268.5 175.3,268.5 175.6,269.4 175.9,268.3 176.3,269.1 176.6,266.1 176.9,265.8 177.3,265.2 177.6,267.8 177.9,265.3 178.2,269.7 178.6,271.1 178.9,270.7 179.2,270.9 179.6,271.5 179.9,270.4 180.2,271.8 180.6,271.9 180.9,271.9 181.2,269.1 181.6,269.5 181.9,270.0 182.2,272.2 182.5,270.9 182.9,274.4 183.2,271.5 183.5,271.4 183.9,271.6 184.2,273.2 184.5,273.7 184.9,277.4 185.2,274.5 185.5,271.1 185.9,270.2 186.2,269.8 186.5,269.1 186.8,270.2 187.2,271.2 187.5,270.5 187.8,270.0 188.2,269.9 188.5,271.8 188.8,271.8 189.2,273.6 189.5,275.2 189.8,275.0 190.2,275.0 190.5,272.3 190.8,272.1 191.2,268.3 191.5,266.9 191.8,264.2 192.1,269.0 192.5,268.2 192.8,268.6 193.1,268.6 193.5,270.3 193.8,268.2 194.1,267.5 194.5,271.3 194.8,270.0 195.1,271.2 195.5,274.3 195.8,274.2 196.1,273.3 196.4,273.6 196.8,272.9 197.1,267.5 197.4,270.2 197.8,269.5 198.1,269.1 198.4,267.0 198.8,267.3 199.1,266.0 199.4,268.0 199.8,270.5 200.1,269.1 200.4,270.3 200.7,270.9 201.1,265.2 201.4,263.3 201.7,266.9 202.1,263.9 202.4,265.3 202.7,266.7 203.1,268.9 203.4,270.5 203.7,272.1 204.1,267.2 204.4,265.9 204.7,264.4 205.0,262.7 205.4,264.9 205.7,267.4 206.0,271.1 206.4,272.8 206.7,271.5 207.0,272.9 207.4,269.4 207.7,268.5 208.0,271.0 208.4,270.3 208.7,271.0 209.0,274.1 209.4,276.5 209.7,270.6 210.0,274.1 210.3,275.0 210.7,272.1 211.0,273.6 211.3,274.9 211.7,272.1 212.0,265.6 212.3,269.0 212.7,268.9 213.0,270.9 213.3,273.2 213.7,274.6 214.0,268.0 214.3,259.2 214.6,259.2 215.0,259.3 215.3,262.2 215.6,266.9 216.0,268.9 216.3,265.9 216.6,260.9 217.0,262.6 217.3,265.1 217.6,269.9 218.0,273.1 218.3,278.3 218.6,276.3 218.9,272.3 219.3,272.2 219.6,266.4 219.9,261.1 220.3,263.1 220.6,268.1 220.9,267.1 221.3,272.7 221.6,276.7 221.9,274.7 222.3,272.0 222.6,269.0 222.9,268.1 223.2,267.2 223.6,266.6 223.9,267.0 224.2,271.9 224.6,270.3 224.9,271.0 225.2,270.5 225.6,269.6 225.9,270.2 226.2,272.1 226.6,270.4 226.9,270.8 227.2,270.7 227.6,269.8 227.9,271.5 228.2,267.5 228.5,266.3 228.9,267.9 229.2,269.6 229.5,268.0 229.9,275.5 230.2,278.8 230.5,274.6 230.9,273.7 231.2,274.9 231.5,274.2 231.9,274.8 232.2,279.5 232.5,277.8 232.8,277.4 233.2,275.3 233.5,269.7 233.8,262.6 234.2,264.8 234.5,262.9 234.8,263.4 235.2,266.9 235.5,273.4 235.8,271.2 236.2,272.3 236.5,269.6 236.8,268.3 237.1,269.9 237.5,267.9 237.8,266.0 238.1,271.9 238.5,274.5 238.8,274.0 239.1,275.8 239.5,276.9 239.8,275.0 240.1,274.1 240.5,272.9 240.8,270.3 241.1,269.9 241.4,266.3 241.8,267.8 242.1,267.3 242.4,269.8 242.8,271.6 243.1,274.4 243.4,273.0 243.8,272.6 244.1,270.2 244.4,272.1 244.8,270.8 245.1,265.4 245.4,265.1 245.8,266.8 246.1,264.4 246.4,266.6 246.7,269.3 247.1,269.6 247.4,269.3 247.7,270.9 248.1,267.5 248.4,269.5 248.7,267.7 249.1,265.7 249.4,264.1 249.7,266.5 250.1,264.9 250.4,267.3 250.7,270.3 251.0,270.6 251.4,269.6 251.7,270.8 252.0,271.8 252.4,271.1 252.7,271.9 253.0,273.7 253.4,275.7 253.7,272.4 254.0,270.9 254.4,264.4 254.7,264.7 255.0,259.1 255.3,261.9 255.7,265.5 256.0,267.5 256.3,264.2 256.7,267.7 257.0,268.6 257.3,264.7 257.7,268.4 258.0,270.2 258.3,270.6 258.7,269.5 259.0,273.6 259.3,273.2 259.6,272.9 260.0,271.8 260.3,271.5 260.6,269.0 261.0,269.5 261.3,269.6 261.6,271.8 262.0,270.2 262.3,264.9 262.6,264.6 263.0,265.2 263.3,265.3 263.6,267.4 263.9,274.7 264.3,276.9 264.6,277.5 264.9,274.1 265.3,271.0 265.6,270.6 265.9,267.3 266.3,266.0 266.6,266.0 266.9,270.4 267.3,271.1 267.6,269.6 267.9,270.1 268.3,271.3 268.6,267.1 268.9,266.3 269.2,268.2 269.6,268.5 269.9,272.5 270.2,276.9 270.6,277.8 270.9,277.7 271.2,275.4 271.6,274.2 271.9,272.2 272.2,270.6 272.6,271.0 272.9,272.3 273.2,273.5 273.5,273.8 273.9,273.9 274.2,275.1 274.5,276.3 274.9,270.1 275.2,263.9 275.5,263.5 275.9,262.6 276.2,261.4 276.5,263.5 276.9,268.7 277.2,268.9 277.5,267.6 277.8,265.9 278.2,259.8 278.5,261.7 278.8,261.9 279.2,261.2 279.5,263.3 279.8,270.7 280.2,270.5 280.5,264.6 280.8,268.1 281.2,267.9 281.5,268.3 281.8,266.2 282.1,270.8 282.5,268.5 282.8,267.9 283.1,268.7 283.5,269.6 283.8,268.7 284.1,269.0 284.5,271.0 284.8,270.2 285.1,270.3 285.5,272.2 285.8,273.1 286.1,272.3 286.5,270.4 286.8,270.4 287.1,271.2 287.4,271.5 287.8,269.2 288.1,265.7 288.4,265.3 288.8,263.5 289.1,264.5 289.4,268.7 289.8,269.7 290.1,272.8 290.4,273.4 290.8,271.4 291.1,266.9 291.4,271.0 291.7,267.9 292.1,268.6 292.4,269.8 292.7,271.7 293.1,269.4 293.4,270.2 293.7,268.6 294.1,268.0 294.4,269.3 294.7,270.9 295.1,270.4 295.4,272.0 295.7,273.3 296.0,272.1 296.4,269.7 296.7,269.3 297.0,269.5 297.4,269.2 297.7,270.5 298.0,272.9 298.4,274.0 298.7,273.0 299.0,272.1 299.4,270.5 299.7,269.2 300.0,270.5 300.3,271.4 300.7,273.1 301.0,273.0 301.3,271.3 301.7,269.3 302.0,266.0 302.3,262.1 302.7,258.3 303.0,262.2 303.3,259.8 303.7,262.0 304.0,262.6 304.3,266.6 304.7,263.8 305.0,262.2 305.3,266.1 305.6,267.4 306.0,267.0 306.3,270.5 306.6,276.4 307.0,274.6 307.3,275.8 307.6,278.3 308.0,278.9 308.3,274.5 308.6,272.0 309.0,271.6 309.3,269.8 309.6,269.3 309.9,270.3 310.3,273.5 310.6,275.8 310.9,277.2 311.3,277.6 311.6,280.6 311.9,279.8 312.3,277.7 312.6,274.6 312.9,273.9 313.3,270.9 313.6,268.0 313.9,268.1 314.2,270.7 314.6,270.7 314.9,270.1 315.2,273.3 315.6,270.7 315.9,269.3 316.2,269.4 316.6,273.4 316.9,273.6 317.2,271.9 317.6,271.1 317.9,270.5 318.2,267.4 318.5,269.0 318.9,271.1 319.2,271.4 319.5,270.0 319.9,271.1 320.2,264.2 320.5,265.4 320.9,265.2 321.2,265.6 321.5,262.7 321.9,265.4 322.2,265.5 322.5,267.2 322.8,266.3 323.2,269.0 323.5,269.2 323.8,269.7 324.2,269.6 324.5,269.4 324.8,270.4 325.2,270.7 325.5,271.1 325.8,269.8 326.2,272.4 326.5,267.0 326.8,267.0 327.2,265.8 327.5,268.0 327.8,263.9 328.1,269.8 328.5,268.7 328.8,265.5 329.1,257.3 329.5,256.6 329.8,255.5 330.1,257.2 330.5,256.8 330.8,265.0 331.1,270.5 331.5,270.4 331.8,271.4 332.1,276.9 332.4,276.7 332.8,275.7 333.1,276.6 333.4,274.5 333.8,269.4 334.1,266.3 334.4,264.6 334.8,261.8 335.1,262.3 335.4,266.4 335.8,268.0 336.1,263.6 336.4,269.1 336.7,271.0 337.1,269.3 337.4,267.8 337.7,273.3 338.1,271.3 338.4,268.7 338.7,271.4 339.1,271.1 339.4,270.5 339.7,269.3 340.1,270.6 340.4,265.4 340.7,270.9 341.0,270.8 341.4,271.6 341.7,272.1 342.0,271.6 342.4,267.7 342.7,268.7 343.0,269.4 343.4,268.8 343.7,272.4 344.0,272.8 344.4,273.3 344.7,267.7 345.0,269.1 345.4,264.6 345.7,260.5 346.0,252.6 346.3,255.2 346.7,255.2 347.0,262.9 347.3,266.5 347.7,272.4 348.0,273.5 348.3,273.1 348.7,269.5 349.0,270.5 349.3,271.4 349.7,270.1 350.0,271.0 350.3,274.6 350.6,276.3 351.0,278.0 351.3,278.2 351.6,277.4 352.0,273.4 352.3,274.6 352.6,272.5 353.0,275.0 353.3,273.1 353.6,275.8 354.0,273.4 354.3,273.8 354.6,271.5 354.9,270.8 355.3,271.6 355.6,272.4 355.9,272.6 356.3,273.9 356.6,270.9 356.9,262.8 357.3,258.0 357.6,257.0 357.9,256.6 358.3,255.8 358.6,262.7 358.9,266.9 359.2,268.5 359.6,265.9 359.9,271.4 360.2,269.2 360.6,266.5 360.9,261.8 361.2,267.5 361.6,268.8 361.9,268.2 362.2,272.5 362.6,278.6 362.9,276.7 363.2,271.7 363.6,274.6 363.9,274.4 364.2,273.0 364.5,268.7 364.9,273.6 365.2,267.5 365.5,265.2 365.9,264.3 366.2,267.8 366.5,266.7 366.9,272.2 367.2,272.5 367.5,273.4 367.9,273.3 368.2,274.3 368.5,273.1 368.8,273.4 369.2,270.5 369.5,271.2 369.8,271.4 370.2,270.3 370.5,269.5 370.8,271.7 371.2,271.3 371.5,269.3 371.8,266.3 372.2,267.4 372.5,268.3 372.8,269.1 373.1,273.0 373.5,273.0 373.8,272.4 374.1,269.8 374.5,261.5 374.8,258.5 375.1,264.2 375.5,264.5 375.8,263.2 376.1,269.3 376.5,271.1 376.8,268.1 377.1,268.2 377.4,273.7 377.8,275.3 378.1,274.3 378.4,277.9 378.8,277.3 379.1,274.8 379.4,273.5 379.8,274.1 380.1,269.8 380.4,271.7 380.8,271.3 381.1,271.3 381.4,269.0 381.7,272.0 382.1,268.8 382.4,270.9 382.7,272.2 383.1,271.4 383.4,265.9 383.7,264.1 384.1,264.9 384.4,264.4 384.7,266.5 385.1,271.2 385.4,275.0 385.7,269.7 386.1,266.3 386.4,263.2 386.7,264.1 387.0,264.5 387.4,268.5 387.7,271.5 388.0,272.1 388.4,270.2 388.7,268.9 389.0,268.3 389.4,268.8 389.7,270.2 390.0,270.7 390.4,270.1 390.7,267.6 391.0,267.9 391.3,268.1 391.7,270.6 392.0,263.7 392.3,267.4 392.7,264.2 393.0,264.0 393.3,260.9 393.7,266.8 394.0,262.2 394.3,266.0 394.7,265.9 395.0,268.5 395.3,271.2 395.6,273.0 396.0,271.2 396.3,270.9 396.6,271.3 397.0,270.2 397.3,271.1 397.6,272.5 398.0,272.7 398.3,274.1 398.6,271.8 399.0,273.3 399.3,274.2 399.6,271.9 399.9,269.8 400.3,270.8 400.6,270.1 400.9,265.5 401.3,268.1 401.6,263.4 401.9,263.5 402.3,264.5 402.6,265.6 402.9,259.3 403.3,260.3 403.6,259.0 403.9,258.5 404.3,258.7 404.6,262.0 404.9,266.3 405.2,268.8 405.6,267.7 405.9,267.4 406.2,272.4 406.6,270.3 406.9,266.0 407.2,263.1 407.6,262.0 407.9,259.3 408.2,260.7 408.6,263.0 408.9,264.0 409.2,270.1 409.5,264.1 409.9,262.0 410.2,263.6 410.5,262.6 410.9,260.1 411.2,268.3 411.5,268.4 411.9,270.2 412.2,272.2 412.5,272.0 412.9,269.3 413.2,269.0 413.5,264.8 413.8,261.4 414.2,260.5 414.5,259.1 414.8,258.5 415.2,259.1 415.5,261.9 415.8,263.1 416.2,266.2 416.5,267.8 416.8,270.3 417.2,274.2 417.5,273.5 417.8,276.1 418.1,277.0 418.5,278.6 418.8,274.8 419.1,276.4 419.5,271.0 419.8,270.6 420.1,267.7 420.5,264.8 420.8,260.3 421.1,264.3 421.5,261.3 421.8,264.1 422.1,268.1 422.5,265.1 422.8,263.7 423.1,265.0 423.4,261.9 423.8,257.1 424.1,259.9 424.4,257.7 424.8,260.7 425.1,262.4 425.4,265.8 425.8,265.8 426.1,269.3 426.4,268.1 426.8,267.9 427.1,267.0 427.4,269.3 427.7,265.8 428.1,261.8 428.4,262.8 428.7,264.5 429.1,262.4 429.4,262.7 429.7,267.3 430.1,266.7 430.4,268.1 430.7,272.2 431.1,271.6 431.4,270.6 431.7,270.0 432.0,271.3 432.4,269.7 432.7,270.1 433.0,269.5 433.4,265.7 433.7,265.5 434.0,266.3 434.4,268.4 434.7,268.7 435.0,271.2 435.4,267.8 435.7,264.1 436.0,259.8 436.3,261.3 436.7,262.6 437.0,264.4 437.3,266.9 437.7,273.1 438.0,269.0 438.3,270.0 438.7,267.1 439.0,266.0 439.3,260.7 439.7,262.6 440.0,259.8 440.3,262.1 440.7,261.8 441.0,261.4 441.3,262.2 441.6,265.0 442.0,263.5 442.3,263.9 442.6,267.4 443.0,263.2 443.3,256.3 443.6,259.1 444.0,260.7 444.3,258.3 444.6,263.1 445.0,267.4 445.3,266.6 445.6,263.0 445.9,263.6 446.3,262.7 446.6,263.5 446.9,263.3 447.3,266.1 447.6,267.0 447.9,265.8 448.3,268.2 448.6,264.5 448.9,264.1 449.3,264.2 449.6,265.2 449.9,264.1 450.2,264.3 450.6,263.4 450.9,260.1 451.2,253.2 451.6,250.1 451.9,250.2 452.2,248.5 452.6,250.5 452.9,255.7 453.2,255.8 453.6,250.9 453.9,250.4 454.2,250.3 454.5,251.8 454.9,254.1 455.2,265.7 455.5,268.6 455.9,267.8 456.2,267.1 456.5,266.4 456.9,261.4 457.2,258.9 457.5,260.1 457.9,259.4 458.2,255.0 458.5,252.1 458.8,253.3 459.2,248.8 459.5,248.9 459.8,251.0 460.2,256.0 460.5,256.7 460.8,259.4 461.2,261.5 461.5,261.0 461.8,262.1 462.2,265.0 462.5,266.7 462.8,265.7 463.2,267.1 463.5,261.4 463.8,260.1 464.1,260.7 464.5,260.5 464.8,261.8 465.1,265.9 465.5,265.4 465.8,263.8 466.1,261.6 466.5,259.7 466.8,256.0 467.1,252.7 467.5,256.6 467.8,257.1 468.1,260.2 468.4,258.4 468.8,258.3 469.1,252.7 469.4,250.4 469.8,240.3 470.1,241.3 470.4,240.2 470.8,245.4 471.1,247.7 471.4,251.0 471.8,253.8 472.1,256.4 472.4,253.0 472.7,249.6 473.1,253.4 473.4,247.2 473.7,243.9 474.1,247.0 474.4,243.1 474.7,240.0 475.1,245.6 475.4,246.0 475.7,239.2 476.1,241.7 476.4,237.1 476.7,230.1 477.0,230.1 477.4,232.0 477.7,233.2 478.0,238.2 478.4,242.0 478.7,237.4 479.0,235.0 479.4,233.5 479.7,230.8 480.0,227.5 480.4,226.6 480.7,229.8 481.0,233.9 481.4,243.3 481.7,248.7 482.0,262.8 482.3,263.6 482.7,263.2 483.0,258.0 483.3,254.3 483.7,247.4 484.0,246.4 484.3,243.8 484.7,246.3 485.0,252.3 485.3,253.3 485.7,255.8 486.0,262.3 486.3,258.8 486.6,253.0 487.0,249.7 487.3,249.3 487.6,245.7 488.0,242.8 488.3,249.1 488.6,251.7 489.0,254.0 489.3,258.6 489.6,260.7 490.0,257.4 490.3,255.1 490.6,248.8 490.9,242.6 491.3,244.5 491.6,247.6 491.9,245.4 492.3,248.8 492.6,249.1 492.9,246.8 493.3,244.7 493.6,246.8 493.9,248.7 494.3,245.9 494.6,244.2 494.9,244.3 495.2,244.5 495.6,238.0 495.9,240.3 496.2,242.7 496.6,240.1 496.9,236.7 497.2,236.6 497.6,238.8 497.9,235.5 498.2,234.3 498.6,239.6 498.9,243.4 499.2,245.0 499.6,247.3 499.9,253.5 500.2,252.0 500.5,255.2 500.9,250.1 501.2,248.8 501.5,243.4 501.9,244.2 502.2,242.2 502.5,240.2 502.9,239.1 503.2,241.0 503.5,238.2 503.9,232.3 504.2,230.7 504.5,237.9 504.8,233.0 505.2,234.3 505.5,238.2 505.8,241.7 506.2,231.8 506.5,237.8 506.8,240.6 507.2,243.1 507.5,245.6 507.8,245.3 508.2,245.9 508.5,242.5 508.8,240.3 509.1,236.0 509.5,238.5 509.8,231.8 510.1,240.7 510.5,236.1 510.8,235.2 511.1,232.2 511.5,234.0 511.8,221.4 512.1,221.6 512.5,225.5 512.8,229.6 513.1,227.3 513.4,228.6 513.8,228.0 514.1,226.6 514.4,227.4 514.8,227.6 515.1,229.2 515.4,231.9 515.8,232.3 516.1,226.1 516.4,226.9 516.8,222.9 517.1,216.3 517.4,212.3 517.7,217.5 518.1,212.9 518.4,212.0 518.7,218.9 519.1,216.3 519.4,211.6 519.7,213.4 520.1,216.4 520.4,214.5 520.7,215.6 521.1,216.8 521.4,217.8 521.7,215.1 522.1,210.6 522.4,209.4 522.7,213.0 523.0,212.2 523.4,224.7 523.7,229.2 524.0,230.0 524.4,227.1 524.7,228.8 525.0,225.6 525.4,224.3 525.7,227.4 526.0,226.7 526.4,227.5 526.7,227.4 527.0,223.8 527.3,218.4 527.7,221.3 528.0,223.5 528.3,217.8 528.7,224.3 529.0,226.9 529.3,223.2 529.7,220.5 530.0,219.5 530.3,220.8 530.7,227.0 531.0,223.5 531.3,223.7 531.6,218.7 532.0,207.9 532.3,202.4 532.6,204.6 533.0,205.8 533.3,203.9 533.6,204.6 534.0,202.2 534.3,199.1 534.6,193.2 535.0,196.2 535.3,197.9 535.6,199.3 535.9,202.1 536.3,199.5 536.6,196.5 536.9,196.9 537.3,206.0 537.6,206.3 537.9,207.4 538.3,209.9 538.6,205.4 538.9,190.5 539.3,188.7 539.6,189.3 539.9,187.5 540.3,190.2 540.6,190.9 540.9,190.0 541.2,190.6 541.6,186.9 541.9,184.3 542.2,185.8 542.6,193.0 542.9,194.8 543.2,205.4 543.6,214.0 543.9,214.4 544.2,207.3 544.6,202.7 544.9,201.8 545.2,200.0 545.5,200.4 545.9,209.5 546.2,214.4 546.5,211.0 546.9,209.6 547.2,216.1 547.5,206.9 547.9,203.0 548.2,202.3 548.5,205.9 548.9,202.1 549.2,204.3 549.5,210.0 549.8,210.8 550.2,202.7 550.5,200.7 550.8,198.5 551.2,196.5 551.5,197.0 551.8,204.8 552.2,217.4 552.5,221.3 552.8,223.0 553.2,221.8 553.5,217.8 553.8,209.5 554.1,212.1 554.5,215.7 554.8,226.1 555.1,229.3 555.5,234.9 555.8,238.1 556.1,236.8 556.5,234.3 556.8,238.3 557.1,240.4 557.5,246.4 557.8,247.5 558.1,252.5 558.5,255.3 558.8,255.7 559.1,251.4 559.4,254.2 559.8,254.9 560.1,254.2 560.4,254.5 560.8,257.2 561.1,263.5 561.4,265.9 561.8,271.1 562.1,273.8 562.4,275.2 562.8,275.6 563.1,275.3 563.4,275.4 563.7,274.4 564.1,274.6 564.4,272.0 564.7,271.8 565.1,268.7 565.4,268.8 565.7,271.5 566.1,272.6 566.4,273.0 566.7,275.0 567.1,275.1 567.4,274.6 567.7,274.2 568.0,272.1 568.4,270.6 568.7,267.4 569.0,267.7 569.4,266.2 569.7,264.4 570.0,266.8 570.4,266.2 570.7,261.9 571.0,262.0 571.4,263.8 571.7,263.2 572.0,267.8 572.3,271.6 572.7,272.5 573.0,273.2 573.3,272.7 573.7,270.9 574.0,269.0 574.3,269.0 574.7,271.2 575.0,272.3 575.3,272.5 575.7,274.3 576.0,274.4 576.3,268.7 576.6,265.3 577.0,263.9 577.3,262.2 577.6,260.4 578.0,263.9 578.3,264.1 578.6,263.9 579.0,265.1 579.3,269.4 579.6,271.3 580.0,273.1 580.3,276.6 580.6,274.5 581.0,267.6 581.3,267.1 581.6,268.5 581.9,267.0 582.3,267.6 582.6,273.4 582.9,272.0 583.3,270.3 583.6,266.3 583.9,267.0 584.3,265.0 584.6,263.4 584.9,265.5 585.3,269.6 585.6,267.8 585.9,271.3 586.2,274.5 586.6,275.3 586.9,272.4 587.2,272.5 587.6,267.7 587.9,266.1 588.2,264.8 588.6,268.6 588.9,271.4 589.2,272.6 589.6,272.8 589.9,269.6 590.2,269.8 590.5,268.0 590.9,266.8 591.2,265.7 591.5,268.3 591.9,267.1 592.2,269.3 592.5,270.3 592.9,272.2 593.2,273.2 593.5,273.2 593.9,274.0 594.2,272.6 594.5,272.1 594.8,271.3 595.2,272.9 595.5,268.3 595.8,269.2 596.2,266.1 596.5,266.1 596.8,265.2 597.2,268.0 597.5,269.6 597.8,270.9 598.2,268.4 598.5,268.2 598.8,268.9 599.2,270.7 599.5,271.0 599.8,273.0 600.1,271.3 600.5,271.6 600.8,267.4 601.1,268.5 601.5,267.1 601.8,267.7 602.1,265.7 602.5,270.6 602.8,269.2 603.1,270.1 603.5,269.2 603.8,270.7 604.1,268.2 604.4,270.4 604.8,269.4 605.1,272.4 605.4,272.6 605.8,272.6 606.1,272.4 606.4,272.9 606.8,274.0 607.1,271.4 607.4,270.1 607.8,270.8 608.1,274.0 608.4,270.0 608.7,271.1 609.1,274.8 609.4,267.6 609.7,267.8 610.1,271.5 610.4,270.5 610.7,270.6 611.1,277.0 611.4,275.7 611.7,270.7 612.1,271.6 612.4,269.6 612.7,268.3 613.0,266.9 613.4,270.3 613.7,266.0 614.0,265.8 614.4,263.2 614.7,262.3 615.0,261.8 615.4,266.6 615.7,267.2 616.0,272.7 616.4,271.5 616.7,272.9 617.0,272.4 617.4,270.5 617.7,265.6 618.0,269.5 618.3,266.3 618.7,268.1 619.0,270.2 619.3,271.8 619.7,269.6 620.0,273.0 620.3,272.1 620.7,272.6 621.0,273.7 621.3,272.5 621.7,272.6 622.0,270.2 622.3,270.3 622.6,270.3 623.0,270.5 623.3,267.9 623.6,269.2 624.0,264.7 624.3,266.3 624.6,269.4 625.0,269.0 625.3,269.2 625.6,274.7 626.0,273.2 626.3,269.8 626.6,267.8 626.9,265.0 627.3,260.8 627.6,254.7 627.9,254.3 628.3,259.3 628.6,261.7 628.9,262.5 629.3,266.6 629.6,268.4 629.9,269.9 630.3,269.0 630.6,269.7 630.9,273.2 631.2,276.1 631.6,272.2 631.9,276.7 632.2,278.9 632.6,270.5 632.9,270.9 633.2,269.9 633.6,268.0 633.9,264.4 634.2,267.7 634.6,266.4 634.9,269.7 635.2,268.8 635.6,271.3 635.9,268.7 636.2,267.3 636.5,265.1 636.9,266.2 637.2,266.2 637.5,271.9 637.9,271.6 638.2,272.2 638.5,268.6 638.9,268.1 639.2,265.5 639.5,264.2 639.9,263.7 640.2,265.7 640.5,261.9 640.8,265.7 641.2,268.4 641.5,269.9 641.8,272.5 642.2,276.5 642.5,275.8 642.8,276.2 643.2,274.5 643.5,273.6 643.8,273.9 644.2,270.8 644.5,268.0 644.8,270.3 645.1,265.8 645.5,264.2 645.8,267.4 646.1,267.5 646.5,266.1 646.8,266.9 647.1,262.4 647.5,259.3 647.8,253.4 648.1,253.6 648.5,256.2 648.8,263.4 649.1,265.2 649.4,271.2 649.8,272.7 650.1,269.0 650.4,263.8 650.8,262.9 651.1,256.8 651.4,254.8 651.8,258.7 652.1,259.4 652.4,258.2 652.8,263.2 653.1,263.0 653.4,262.6 653.7,261.2 654.1,261.0 654.4,263.1 654.7,261.4 655.1,259.8 655.4,262.5 655.7,261.7 656.1,259.4 656.4,262.0 656.7,261.1 657.1,259.8 657.4,262.0 657.7,263.1 658.1,265.9 658.4,264.8 658.7,265.6 659.0,268.8 659.4,268.3 659.7,262.9 660.0,261.7 660.4,263.2 660.7,261.2 661.0,262.6 661.4,263.0 661.7,266.4 662.0,264.5 662.4,264.4 662.7,262.8 663.0,264.6 663.3,261.3 663.7,260.8 664.0,253.6 664.3,253.4 664.7,253.4 665.0,255.7 665.3,260.7 665.7,264.4 666.0,264.1 666.3,258.6 666.7,258.1 667.0,252.9 667.3,248.3 667.6,247.0 668.0,254.9 668.3,255.3 668.6,257.5 669.0,261.5 669.3,263.1 669.6,260.3 670.0,256.0 670.3,251.8 670.6,253.9 671.0,252.5 671.3,247.4 671.6,254.4 671.9,254.3 672.3,250.4 672.6,249.2 672.9,253.2 673.3,252.2 673.6,257.1 673.9,260.0 674.3,267.1 674.6,267.8 674.9,263.0 675.3,263.0 675.6,265.1 675.9,258.3 676.3,254.8 676.6,258.0 676.9,256.6 677.2,258.8 677.6,263.2 677.9,267.3 678.2,269.2 678.6,268.3 678.9,265.2 679.2,267.0 679.6,266.3 679.9,266.4 680.2,266.0 680.6,263.0 680.9,257.4 681.2,256.9 681.5,252.5 681.9,252.6 682.2,257.0 682.5,255.5 682.9,251.2 683.2,253.9 683.5,254.5 683.9,252.0 684.2,254.0 684.5,254.3 684.9,255.3 685.2,253.1 685.5,254.7 685.8,255.7 686.2,258.1 686.5,257.7 686.8,259.8 687.2,260.6 687.5,263.6 687.8,266.2 688.2,267.0 688.5,267.2 688.8,265.1 689.2,262.8 689.5,262.3 689.8,263.3 690.1,265.3 690.5,270.4 690.8,267.7 691.1,266.5 691.5,260.0 691.8,255.7 692.1,247.1 692.5,249.7 692.8,249.8 693.1,248.4 693.5,249.5 693.8,253.9 694.1,256.4 694.5,257.0 694.8,260.8 695.1,256.0 695.4,254.6 695.8,246.1 696.1,241.1 696.4,235.2 696.8,240.9 697.1,237.7 697.4,240.2 697.8,244.3 698.1,248.6 698.4,248.4 698.8,246.8 699.1,249.1 699.4,242.3 699.7,238.5 700.1,232.1 700.4,234.3 700.7,226.4 701.1,226.6 701.4,233.6 701.7,233.3 702.1,232.1 702.4,237.4 702.7,237.8 703.1,234.3 703.4,238.3 703.7,237.9 704.0,240.6 704.4,241.1 704.7,237.3 705.0,235.7 705.4,233.8 705.7,231.3 706.0,230.4 706.4,231.6 706.7,233.0 707.0,237.0 707.4,230.9 707.7,232.1 708.0,233.3 708.3,232.7 708.7,229.2 709.0,230.9 709.3,234.7 709.7,236.7 710.0,230.3 710.3,228.3 710.7,229.5 711.0,222.0 711.3,218.1 711.7,225.7 712.0,226.7 712.3,228.6 712.6,231.1 713.0,234.0 713.3,233.4 713.6,240.8 714.0,240.7 714.3,246.8 714.6,243.5 715.0,240.2 715.3,240.8 715.6,239.4 716.0,240.1 716.3,251.1 716.6,255.5 717.0,248.2 717.3,250.7 717.6,244.9 717.9,235.5 718.3,227.9 718.6,230.4 718.9,225.9 719.3,228.4 719.6,230.0 719.9,236.5 720.3,243.8 720.6,247.2 720.9,248.7 721.3,245.2 721.6,241.7 721.9,236.8 722.2,236.0 722.6,230.1 722.9,229.8 723.2,229.6 723.6,224.0 723.9,224.4 724.2,224.1 724.6,226.3 724.9,229.6 725.2,233.1 725.6,230.5 725.9,236.6 726.2,239.7 726.5,238.6 726.9,234.7 727.2,234.2 727.5,231.3 727.9,226.1 728.2,222.1 728.5,230.3 728.9,233.5 729.2,235.9 729.5,243.1 729.9,249.5 730.2,247.2 730.5,251.6 730.8,249.8 731.2,242.6 731.5,245.1 731.8,242.9 732.2,243.6 732.5,243.5 732.8,245.1 733.2,237.9 733.5,237.0 733.8,228.6 734.2,232.0 734.5,232.7 734.8,233.1 735.2,229.1 735.5,228.5 735.8,227.2 736.1,225.0 736.5,230.8 736.8,232.9 737.1,234.7 737.5,228.5 737.8,226.7 738.1,220.7 738.5,222.4 738.8,226.9 739.1,233.5 739.5,233.4 739.8,233.8 740.1,232.7 740.4,228.2 740.8,226.6 741.1,235.9 741.4,234.7 741.8,239.4 742.1,246.1 742.4,241.2 742.8,241.7 743.1,249.3 743.4,248.8 743.8,249.8 744.1,252.9 744.4,250.1 744.7,245.6 745.1,239.1 745.4,232.9 745.7,231.3 746.1,225.2 746.4,218.9 746.7,218.8 747.1,214.8 747.4,219.6 747.7,217.1 748.1,220.8 748.4,219.1 748.7,219.0 749.0,217.3 749.4,218.9 749.7,223.4 750.0,226.4 750.4,230.3 750.7,226.9 751.0,231.1 751.4,229.8 751.7,229.0 752.0,227.5 752.4,237.3 752.7,231.1 753.0,234.5 753.4,234.4 753.7,233.1 754.0,219.9 754.3,221.3 754.7,210.5 755.0,212.9 755.3,216.8 755.7,219.9 756.0,220.4 756.3,221.4 756.7,218.2 757.0,212.2 757.3,209.6 757.7,222.3 758.0,225.4 758.3,224.9 758.6,230.6 759.0,239.3 759.3,226.3 759.6,224.9 760.0,224.0 760.3,217.7 760.6,217.0 761.0,228.5 761.3,225.2 761.6,224.3 762.0,233.2 762.3,229.6 762.6,220.9 762.9,229.9 763.3,232.3 763.6,227.4 763.9,228.1 764.3,225.3 764.6,221.1 764.9,221.1 765.3,221.6 765.6,218.9 765.9,216.2 766.3,214.4 766.6,211.6 766.9,207.7 767.2,203.8 767.6,206.6 767.9,205.4 768.2,207.7 768.6,221.7 768.9,227.8 769.2,227.6 769.6,225.1 769.9,228.5 770.2,215.6 770.6,211.9 770.9,215.3 771.2,217.0 771.6,214.2 771.9,218.3 772.2,221.5 772.5,217.2 772.9,224.6 773.2,229.5 773.5,233.8 773.9,236.9 774.2,239.3 774.5,238.0 774.9,232.8 775.2,231.0 775.5,225.7 775.9,223.1 776.2,217.4 776.5,216.5 776.8,212.2 777.2,211.1 777.5,209.1 777.8,209.9 778.2,217.2 778.5,220.2 778.8,216.8 779.2,217.1 779.5,219.1 779.8,211.8 780.2,205.7 780.5,207.7 780.8,207.4 781.1,201.2 781.5,205.0 781.8,201.8 782.1,201.2 782.5,213.6 782.8,219.7 783.1,214.5 783.5,214.1 783.8,212.8 784.1,199.8 784.5,194.6 784.8,199.7 785.1,200.6 785.4,203.9 785.8,206.3 786.1,208.1 786.4,201.8 786.8,209.1 787.1,207.1 787.4,204.4 787.8,199.4 788.1,199.2 788.4,195.4 788.8,197.8 789.1,197.3 789.4,200.0 789.7,201.7 790.1,196.5 790.4,196.2 790.7,200.1 791.1,202.9 791.4,204.5 791.7,203.3 792.1,202.5 792.4,198.6 792.7,198.8 793.1,200.2 793.4,206.8 793.7,202.9 794.1,215.2 794.4,212.4 794.7,205.9 795.0,206.5 795.4,204.8 795.7,201.2 796.0,204.3 796.4,211.9 796.7,212.1 797.0,217.1 797.4,206.4 797.7,201.9 798.0,198.8 798.4,196.0 798.7,195.9 799.0,195.0 799.3,194.6 799.7,193.5 800.0,194.9 800.3,193.3 800.7,194.7 801.0,192.7 801.3,199.4 801.7,193.7 802.0,191.5 802.3,191.8 802.7,198.9 803.0,188.9 803.3,193.5 803.6,196.5 804.0,195.6 804.3,192.5 804.6,191.5 805.0,188.8 805.3,190.2 805.6,198.5 806.0,194.8 806.3,195.1 806.6,193.3 807.0,186.3 807.3,173.8 807.6,171.1 807.9,181.8 808.3,183.7 808.6,188.8 808.9,197.9 809.3,205.7 809.6,199.2 809.9,201.8 810.3,207.4 810.6,210.3 810.9,212.8 811.3,213.6 811.6,217.5 811.9,217.2 812.3,216.2 812.6,218.3 812.9,222.5 813.2,227.2 813.6,231.5 813.9,236.0 814.2,233.2 814.6,233.8 814.9,230.0 815.2,236.7 815.6,237.8 815.9,241.1 816.2,238.7 816.6,245.2 816.9,236.0 817.2,237.1 817.5,240.8 817.9,249.5 818.2,244.8 818.5,249.2 818.9,249.7 819.2,252.1 819.5,253.4 819.9,256.5 820.2,255.5 820.5,258.0 820.9,252.1 821.2,249.7 821.5,246.1 821.8,244.9 822.2,240.2 822.5,242.2 822.8,244.3 823.2,251.7 823.5,255.3 823.8,261.4 824.2,265.6 824.5,261.3 824.8,257.4 825.2,259.1 825.5,259.1 825.8,261.4 826.1,263.4 826.5,265.1 826.8,261.0 827.1,261.6 827.5,260.9 827.8,263.3 828.1,263.8 828.5,266.1 828.8,263.3 829.1,263.9 829.5,261.7 829.8,263.3 830.1,260.6 830.5,259.3 830.8,254.3 831.1,253.9 831.4,252.0 831.8,252.1 832.1,255.0 832.4,259.8 832.8,262.3 833.1,258.9 833.4,256.8 833.8,257.2 834.1,257.9 834.4,256.1 834.8,260.4 835.1,264.5 835.4,261.5 835.7,258.2 836.1,257.6 836.4,257.9 836.7,261.3 837.1,261.8 837.4,265.4 837.7,262.8 838.1,262.0 838.4,257.2 838.7,262.3 839.1,254.3 839.4,254.0 839.7,255.1 840.0,250.1 840.4,244.2 840.7,244.7 841.0,247.4 841.4,242.4 841.7,248.6 842.0,246.8 842.4,245.7 842.7,239.1 843.0,244.2 843.4,242.1 843.7,239.2 844.0,240.6 844.3,247.9 844.7,239.1 845.0,243.6 845.3,248.7 845.7,248.4 846.0,249.2 846.3,252.8 846.7,244.7 847.0,244.5 847.3,246.4 847.7,245.6 848.0,242.3 848.3,241.5 848.6,240.1 849.0,237.0 849.3,228.2 849.6,227.6 850.0,231.1 850.3,227.1 850.6,228.8 851.0,232.1 851.3,231.9 851.6,226.9 852.0,226.7 852.3,225.4 852.6,225.3 853.0,228.2 853.3,235.6 853.6,232.8 853.9,233.1 854.3,233.7 854.6,230.5 854.9,222.4 855.3,225.0 855.6,223.1 855.9,222.4 856.3,226.4 856.6,228.0 856.9,234.4 857.3,237.3 857.6,245.0 857.9,242.4 858.2,243.1 858.6,238.3 858.9,235.5 859.2,225.8 859.6,225.9 859.9,226.6 860.2,224.3 860.6,224.2 860.9,224.0 861.2,224.2 861.6,221.1 861.9,229.1 862.2,229.7 862.5,235.3 862.9,230.6 863.2,234.6 863.5,227.1 863.9,230.7 864.2,230.2 864.5,230.2 864.9,233.1 865.2,229.8 865.5,227.9 865.9,223.8 866.2,224.3 866.5,222.0 866.8,224.8 867.2,219.7 867.5,217.6 867.8,221.6 868.2,215.2 868.5,212.5 868.8,221.5 869.2,220.7 869.5,218.5 869.8,222.6 870.2,227.3 870.5,222.6 870.8,220.2 871.2,218.1 871.5,220.5 871.8,214.7 872.1,218.1 872.5,222.2 872.8,220.2 873.1,216.2 873.5,225.5 873.8,216.3 874.1,217.1 874.5,217.3" stroke="#1470C4" stroke-width="1.5" marker-start="url(#mdb)" marker-mid="url(#mdb)"/>
</g>
<path d="M108.49 272.50L118.29 272.50M109.93 269.04L116.85 275.96M113.39 267.60L113.39 277.40M116.85 269.04L109.93 275.96M141.58 272.50L151.38 272.50M143.02 269.04L149.94 275.96M146.48 267.60L146.48 277.40M149.94 269.04L143.02 275.96M174.67 272.50L184.47 272.50M176.11 269.04L183.03 275.96M179.57 267.60L179.57 277.40M183.03 269.04L176.11 275.96M207.76 272.50L217.56 272.50M209.20 269.04L216.12 275.96M212.66 267.60L212.66 277.40M216.12 269.04L209.20 275.96M240.85 272.50L250.65 272.50M242.29 269.04L249.21 275.96M245.75 267.60L245.75 277.40M249.21 269.04L242.29 275.96M273.94 272.50L283.74 272.50M275.38 269.04L282.30 275.96M278.84 267.60L278.84 277.40M282.30 269.04L275.38 275.96M307.03 272.50L316.83 272.50M308.47 269.04L315.39 275.96M311.93 267.60L311.93 277.40M315.39 269.04L308.47 275.96M340.12 272.50L349.92 272.50M341.56 269.04L348.48 275.96M345.02 267.60L345.02 277.40M348.48 269.04L341.56 275.96M373.21 272.50L383.01 272.50M374.65 269.04L381.57 275.96M378.11 267.60L378.11 277.40M381.57 269.04L374.65 275.96M406.30 272.50L416.10 272.50M407.74 269.04L414.66 275.96M411.20 267.60L411.20 277.40M414.66 269.04L407.74 275.96M439.39 272.50L449.19 272.50M440.83 269.04L447.75 275.96M444.29 267.60L444.29 277.40M447.75 269.04L440.83 275.96M472.48 272.50L482.28 272.50M473.92 269.04L480.84 275.96M477.38 267.60L477.38 277.40M480.84 269.04L473.92 275.96M505.57 272.50L515.37 272.50M507.01 269.04L513.93 275.96M510.47 267.60L510.47 277.40M513.93 269.04L507.01 275.96M538.66 272.50L548.46 272.50M540.10 269.04L547.02 275.96M543.56 267.60L543.56 277.40M547.02 269.04L540.10 275.96M571.75 272.50L581.55 272.50M573.19 269.04L580.11 275.96M576.65 267.60L576.65 277.40M580.11 269.04L573.19 275.96M604.84 272.50L614.64 272.50M606.28 269.04L613.20 275.96M609.74 267.60L609.74 277.40M613.20 269.04L606.28 275.96M637.93 272.50L647.73 272.50M639.37 269.04L646.29 275.96M642.83 267.60L642.83 277.40M646.29 269.04L639.37 275.96M671.02 272.50L680.82 272.50M672.46 269.04L679.38 275.96M675.92 267.60L675.92 277.40M679.38 269.04L672.46 275.96M704.11 272.50L713.91 272.50M705.55 269.04L712.47 275.96M709.01 267.60L709.01 277.40M712.47 269.04L705.55 275.96M737.20 272.50L747.00 272.50M738.64 269.04L745.56 275.96M742.10 267.60L742.10 277.40M745.56 269.04L738.64 275.96M770.29 152.50L780.09 152.50M771.73 149.04L778.65 155.96M775.19 147.60L775.19 157.40M778.65 149.04L771.73 155.96M803.38 767.50L813.18 767.50M804.82 764.04L811.74 770.96M808.28 762.60L808.28 772.40M811.74 764.04L804.82 770.96M836.47 198.80L846.27 198.80M837.91 195.34L844.83 202.26M841.37 193.90L841.37 203.70M844.83 195.34L837.91 202.26M869.56 152.50L879.36 152.50M871.00 149.04L877.92 155.96M874.46 147.60L874.46 157.40M877.92 149.04L871.00 155.96" stroke="#D0008C" stroke-width="1.3" fill="none"/>
</svg>
<svg class="abs" style="left:770px;top:95px" width="110" height="25" viewBox="770 95 110 25" fill="none" stroke="#6b6b6b" stroke-width="1">
<rect x="776" y="99" width="19" height="19" fill="#f7f7f7" stroke="none"/>
<path d="M777.5 110.5 V114.5 H789.5 V110.5 Z" fill="#f4f4f4"/>
<path d="M780.5 112.5 Q780 106 785.5 104.5 V102.5 L789.5 105.8 L785.5 109 V107 Q782.5 107.5 782 112.5 Z" stroke="#7a7a7a" fill="#f4f4f4"/>
<path d="M789.2 115.8 L793 112 V115.8 Z" fill="#6b6b6b" stroke="none"/>
<path d="M802.5 116.5 L797.6 109.6 Q797 107.6 799.2 107.8 L800.8 109.4 L800.5 103.2 Q801.6 101.6 802.6 103 L803 107.6 L803.2 102.2 Q804.6 100.6 805.8 102.2 L805.8 107.6 L806.6 102.6 Q807.8 101.4 808.8 102.8 L808.6 108.4 L810 104.4 Q811.6 103.2 812.4 104.8 L811.2 112.6 L810.6 116.5 Z"/>
<circle cx="823.4" cy="107.4" r="5.9"/>
<path d="M820.2 107.4 H826.8 M823.4 104.1 V110.7 M827.6 111.6 L832.6 116.6"/>
<circle cx="843.5" cy="107.4" r="5.9"/>
<path d="M840.2 107.4 H846.8 M847.7 111.6 L852.7 116.6"/>
<path d="M857.3 109.4 L865.1 101.6 L872.9 109.4 M859.6 108.4 V116.5 H863.6 V111.6 H866.6 V116.5 H870.6 V108.4"/>
<path d="M868 102 H871 V105 Z" fill="#6b6b6b" stroke="none"/>
</svg>

<div class="abs" id="divider"></div>
<div class="abs" id="rhead"><span>Training Progress</span></div>
<div class="abs dots" style="left:1182px;top:65px"><i style="top:0"></i><i style="top:4px"></i><i style="top:8px"></i></div>
<div class="abs" id="rbg"></div>
<div class="abs" id="status"></div>
<div class="abs" id="stl"></div>
<div class="abs" id="str"></div>

<div class="abs" style="left:911px;top:97px;width:160px;height:15px;background:#fff"></div>
<div class="abs" style="left:911px;top:97px;width:72px;height:15px;background:#2789db"></div>
<div class="abs btn" style="left:1081px;top:92px;width:110px;height:25px;color:#a3a3a3;border-color:#cfcfcf;line-height:23px">Training stopped</div>
<div class="t12" style="left:911px;top:128px">Episode number:</div>
<div class="t12" style="left:1041px;top:128px">2400/5000</div>
<div class="t12" style="left:911px;top:153px">Start time:</div>
<div class="t12" style="left:1041px;top:153px">25-Oct-2024 22:31:19</div>
<div class="t12" style="left:911px;top:178px">Duration:</div>
<div class="t12" style="left:1041px;top:178px">03:34:50</div>
<div class="t12" style="left:911px;top:203px">Final result:</div>
<div class="t12" style="left:1041px;top:203px;line-height:14.9px;top:201.6px">Training finished after all<br>agents reached stop<br>training criteria.</div>
<div class="panel" style="left:911px;top:258px;width:280px;height:295px"><div class="phead"><span>Training Information</span></div></div>
<div class="abs" style="left:922px;top:289px;width:258px;height:95px;border:1px solid #8f8f8f;background:#fff"></div>
<div class="abs" style="left:923px;top:290px;width:256px;height:27px;background:#f5f5f5;border-bottom:1px solid #8f8f8f"></div>
<div class="abs" style="left:923px;top:317px;width:256px;height:25px;background:#2789db;border-bottom:1px solid #8f8f8f"></div>
<div class="abs" style="left:1051px;top:290px;width:1px;height:51px;background:#8f8f8f"></div>
<div class="t12 tb" style="left:926px;top:297px;color:#111">Agent</div>
<div class="t12 tb" style="left:1055px;top:297px;color:#111">Status</div>
<div class="t12" style="left:926px;top:320px;color:#fff">rlPPOAgent</div>
<div class="t12" style="left:1055px;top:320px;color:#fff">Training finished</div>
<div class="t12 tb" style="left:922px;top:395px;color:#111">Episode Information (rlPPOAgent):</div>
<div class="t12" style="left:922px;top:420px">Episode reward:</div>
<div class="t12" style="left:1042px;top:420px">-1762.8763</div>
<div class="t12" style="left:922px;top:445px">Average reward:</div>
<div class="t12" style="left:1042px;top:445px">-2104.9152</div>
<div class="t12" style="left:922px;top:470px">Episode Q0:</div>
<div class="t12" style="left:1042px;top:470px">-770.8986</div>
<div class="t12" style="left:922px;top:495px">Evaluation statistic:</div>
<div class="t12" style="left:1042px;top:495px">-730.2556</div>
<div class="abs btn" style="left:1070px;top:519px;width:110px;height:23px;line-height:21px">More Details...</div>
<div class="panel" style="left:911px;top:563px;width:280px;height:118px"><div class="phead"><span>Plot Options</span></div></div>
<div class="abs cb" style="left:922px;top:595px"><svg width="12" height="12" viewBox="0 0 12 12"><path d="M2 6.2L4.6 9L10.5 2.5" stroke="#111" stroke-width="2" fill="none"/></svg></div>
<div class="t12" style="left:939px;top:595px">Show EpisodeQ0</div>
<div class="abs cb" style="left:922px;top:622px"><svg width="12" height="12" viewBox="0 0 12 12"><path d="M2 6.2L4.6 9L10.5 2.5" stroke="#111" stroke-width="2" fill="none"/></svg></div>
<div class="t12" style="left:939px;top:622px">Show evaluation statistic</div>
<div class="abs cb" style="left:922px;top:652px"></div>
<div class="t12" style="left:939px;top:651px">Show last N episodes</div>
<div class="abs" style="left:1066px;top:647px;width:114px;height:23px;border:1px solid #dcdcdc;background:#f4f4f4"></div>
<div class="t12" style="left:1066px;top:652px;width:109px;text-align:right;color:#9c9c9c">5000</div>
<div class="panel" style="left:911px;top:691px;width:280px;height:102px"></div>
<div class="abs" style="left:917px;top:697px;width:268px;height:90px;background:#fff"></div>
<div class="abs" style="left:973px;top:704px;width:41px;height:1px;background:#33B6EC"></div>
<div class="abs" style="left:992px;top:703px;width:3px;height:3px;border-radius:50%;background:#33B6EC"></div>
<div class="abs" style="left:973px;top:723px;width:41px;height:1px;background:#0F6FC0"></div>
<div class="abs" style="left:992px;top:722px;width:3px;height:3px;border-radius:50%;background:#0F6FC0"></div>
<div class="abs" style="left:973px;top:742px;width:41px;height:1px;background:#EDB120"></div>
<div class="abs" style="left:992px;top:741px;width:3px;height:3px;border-radius:50%;background:#EDB120"></div>
<svg class="abs" style="left:987px;top:764px" width="13" height="13" viewBox="0 0 13 13"><path d="M6.5 1.5V11.5M1.5 6.5H11.5M2.9 2.9L10.1 10.1M10.1 2.9L2.9 10.1" stroke="#dc2fa0" stroke-width="0.95"/></svg>
<div class="leg" style="top:697px">Episode reward</div>
<div class="leg" style="top:716px">Average reward</div>
<div class="leg" style="top:735px">Episode Q0</div>
<div class="leg" style="top:764px">Evaluation statistic</div>
<svg class="abs" style="left:1186px;top:841px" width="10" height="13" viewBox="0 0 10 13"><path d="M0 0L7 6.5L0 13Z" fill="#9a9a9a"/><rect x="7" y="0" width="2.2" height="13" fill="#9a9a9a"/></svg>

<div class="abs" id="lb"></div>
<div class="abs" id="rb"></div>
<div class="abs" id="bb"></div>
</body></html>
